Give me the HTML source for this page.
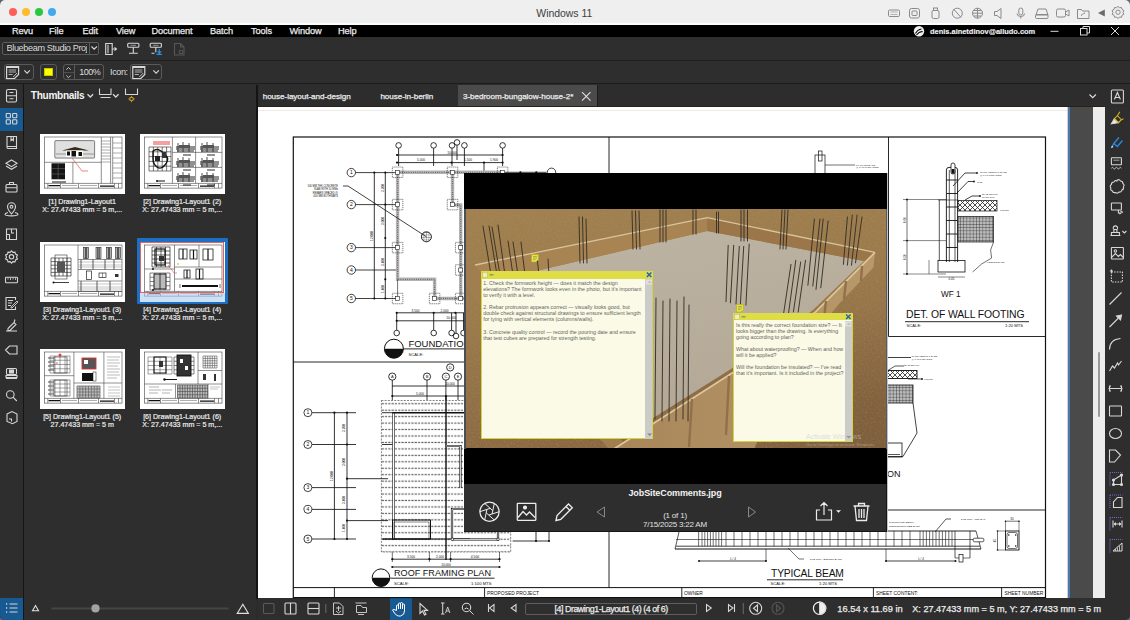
<!DOCTYPE html>
<html><head><meta charset="utf-8"><style>
*{margin:0;padding:0;box-sizing:border-box}
html,body{width:1130px;height:620px;overflow:hidden;background:#5c6570}
body{position:relative;font-family:"Liberation Sans",sans-serif}
.a{position:absolute;white-space:nowrap}
#win{position:absolute;left:0;top:0;width:1130px;height:620px;border-radius:5px 5px 5px 5px;overflow:hidden;background:#2b2b2b}
.mt{font-size:9.2px;color:#ececec;letter-spacing:-0.1px;-webkit-text-stroke:0.25px #ececec}
.tab{top:91.8px;font-size:8.1px;color:#ececec;letter-spacing:-0.05px;-webkit-text-stroke:0.25px #ececec}
.st{font-size:8.9px;color:#ececec;-webkit-text-stroke:0.25px #ececec}
.cap{position:absolute;color:#ececec;-webkit-text-stroke:0.2px #ececec;font-size:7.1px;text-align:center;width:120px;line-height:8.8px;white-space:nowrap}
.nt{font-size:5.3px;line-height:6.05px;color:#64645c;white-space:nowrap}
svg{position:absolute;overflow:visible}
</style></head>
<body><div id="win">
<div class="a" style="left:0;top:0;width:1130px;height:23px;background:#efefef"></div>
<div class="a" style="left:0;top:23px;width:1130px;height:1.6px;background:#fdfdfd"></div>
<div class="a" style="left:8.5px;top:8.4px;width:8px;height:8px;border-radius:50%;background:#fe5f57"></div>
<div class="a" style="left:21.8px;top:8.4px;width:8px;height:8px;border-radius:50%;background:#febc2e"></div>
<div class="a" style="left:35px;top:8.4px;width:8px;height:8px;border-radius:50%;background:#2ac840"></div>
<div class="a" style="left:48.1px;top:8.4px;width:8px;height:8px;border-radius:50%;background:#40aaf0"></div>
<div class="a" style="left:536.3px;top:6.8px;font-size:10.5px;color:#3e3e3e;letter-spacing:-0.05px">Windows 11</div>
<svg class="a" style="left:0;top:0" width="1130" height="24" fill="none" stroke="#8a8a8a" stroke-width="1"><rect x="888.5" y="10" width="11" height="6.5" rx="1.2"/><path d="M890.5 12h7M890.5 14.5h7" stroke-width="0.6"/><rect x="909.5" y="8.5" width="10" height="9.5" rx="2"/><rect x="912" y="11" width="5" height="4.5" rx="0.8"/><rect x="932" y="10.5" width="7" height="8" rx="1.5"/><rect x="933.5" y="8" width="4" height="2.5"/><circle cx="957.3" cy="13.2" r="5"/><path d="M953.5 9l7.6 8.5"/><circle cx="977.5" cy="13.2" r="5"/><path d="M972.5 13.2h10M977.5 8.2v10M974 10.5h7M974 16h7"/><path d="M994.5 11.5h2.5l4-3v10l-4-3h-2.5z"/><rect x="1018.8" y="8" width="4" height="7" rx="2"/><path d="M1017 13.5q0 3 3.8 3q3.8 0 3.8-3M1020.8 16.5v2"/><path d="M1036 15l2-6h8l2 6z"/><rect x="1035.5" y="14.5" width="12.5" height="4" rx="1"/><rect x="1056.5" y="9" width="9" height="8" rx="1.5"/><path d="M1065.5 12l3.5-2v6l-3.5-2"/><path d="M1077.5 9.5h4l1 1.5h6.5v7.5h-11.5z"/><path d="M1081 15l4-2M1081 15.5h1M1085 13h-1" stroke-width="0.8"/></svg>
<svg class="a" style="left:0;top:0" width="1130" height="24"><path d="M1104.8 9.5v7l-6.8-3.5z" fill="#6a6a6a"/><g fill="none" stroke="#8a8a8a" stroke-width="1"><circle cx="1118" cy="12.2" r="2.2"/><path d="M1118 6.2l1.4 1.6 2.1-.3.5 2 1.9 1-.9 1.9.9 1.9-1.9 1-.5 2-2.1-.3-1.4 1.6-1.4-1.6-2.1.3-.5-2-1.9-1 .9-1.9-.9-1.9 1.9-1 .5-2 2.1.3z"/></g></svg>
<div class="a" style="left:0;top:24.6px;width:1130px;height:12.6px;background:#000"></div>
<div class="a mt" style="left:12px;top:25.8px">Revu</div>
<div class="a mt" style="left:49px;top:25.8px">File</div>
<div class="a mt" style="left:82.5px;top:25.8px">Edit</div>
<div class="a mt" style="left:116px;top:25.8px">View</div>
<div class="a mt" style="left:151.5px;top:25.8px">Document</div>
<div class="a mt" style="left:210px;top:25.8px">Batch</div>
<div class="a mt" style="left:251px;top:25.8px">Tools</div>
<div class="a mt" style="left:289.5px;top:25.8px">Window</div>
<div class="a mt" style="left:338px;top:25.8px">Help</div>
<div class="a" style="left:930px;top:26.6px;font-size:7.45px;font-weight:bold;color:#f0f0f0;-webkit-text-stroke:0.15px #f0f0f0">denis.ainetdinov@alludo.com</div>
<svg class="a" style="left:912px;top:25px" width="14" height="13"><circle cx="7" cy="6.3" r="5.2" fill="#f0f0f0"/><path d="M3.5 8.5q2-4 6-4.5M4.5 10q3-4 6.2-3.2" stroke="#000" stroke-width="1.1" fill="none"/></svg>
<svg class="a" style="left:0;top:24px" width="1130" height="14" stroke="#d8d8d8" stroke-width="1" fill="none"><path d="M1050.5 7.3h8"/><rect x="1080.5" y="4.5" width="6.5" height="6.5"/><path d="M1083 4.5v-2h6.5v6.5h-2.5"/><path d="M1111 3l8 8M1119 3l-8 8"/></svg>
<div class="a" style="left:0;top:37.2px;width:1130px;height:22.6px;background:#2e2e2e"></div>
<div class="a" style="left:0;top:59.6px;width:1130px;height:1px;background:#1f1f1f"></div>
<div class="a" style="left:0;top:60.6px;width:1130px;height:23px;background:#2e2e2e"></div>
<div class="a" style="left:0;top:83px;width:1130px;height:1.4px;background:#1c1c1c"></div>
<div class="a" style="left:2px;top:42px;width:97px;height:13px;border:1px solid #5c5c5c;border-radius:2px;background:#2a2a2a"></div>
<div class="a" style="left:88.6px;top:42px;width:1px;height:13px;background:#5c5c5c"></div>
<div class="a" style="left:6.5px;top:43.4px;width:80px;height:11px;overflow:hidden;white-space:nowrap;font-size:9.1px;color:#dcdcdc;letter-spacing:-0.35px">Bluebeam Studio Projects</div>
<svg class="a" style="left:0;top:37px" width="300" height="48" fill="none" stroke="#d8d8d8" stroke-width="1.1"><path d="M91.5 9.5l2.7 2.7 2.7-2.7"/><path d="M105.7 6.5h6.5v11h-6.5zM108 7.8v8.5"/><path d="M112.5 12h3.5M114.5 10.3l2 1.7-2 1.7"/><rect x="127.7" y="6.3" width="11.2" height="4" rx="1"/><path d="M133.3 10.3v5.5M129 16.2h8.8"/><path d="M130.5 8.3h5.5" stroke-width="0.6"/><rect x="150.2" y="6.3" width="11.2" height="4" rx="1"/><path d="M155.8 10.3v5M151.5 16.2h3"/><path d="M153 8.3h5.5" stroke-width="0.6"/><path d="M159.3 12v4M157.5 14.3l1.8 1.8 1.8-1.8M156.5 17.3h5.5" stroke="#2b8ee0" stroke-width="1.2"/><path d="M174.5 6.5h6l3.5 3.5v8h-9.5z M180.5 6.5v3.5h3.5" stroke="#575757"/><circle cx="181" cy="15" r="1.8" stroke="#575757"/></svg>
<div class="a" style="left:4.4px;top:64px;width:29.2px;height:16.2px;border:1px solid #5a5a5a;border-radius:3px"></div>
<div class="a" style="left:40px;top:64px;width:16.6px;height:16.2px;border:1px solid #5a5a5a;border-radius:3px"></div>
<div class="a" style="left:63px;top:64px;width:40.5px;height:16.2px;border:1px solid #5a5a5a;border-radius:3px"></div>
<div class="a" style="left:129.7px;top:64px;width:32.8px;height:16.2px;border:1px solid #5a5a5a;border-radius:3px"></div>
<div class="a" style="left:74px;top:64px;width:1px;height:16.2px;background:#5a5a5a"></div>
<div class="a" style="left:44px;top:67.5px;width:8.7px;height:8.9px;background:#ffff00;border:0.5px solid #c8c800"></div>
<div class="a" style="left:79.2px;top:67.4px;font-size:9px;color:#dedede;letter-spacing:-0.45px">100%</div>
<div class="a" style="left:110px;top:67.4px;font-size:9px;color:#dedede;letter-spacing:-0.35px">Icon:</div>
<svg class="a" style="left:0;top:60px" width="300" height="25" fill="none" stroke="#d8d8d8" stroke-width="1.1"><path d="M6.6 6.5h12v8l-4 4h-8z" stroke-width="1.2"/><path d="M6.6 7.3h12" stroke-width="1.6"/><path d="M8.6 10h7.5M8.6 12h7.5M8.6 14.5h4" stroke-width="0.8"/><path d="M13.1 17l4-4" stroke-width="0.9"/><path d="M24.3 10.3l2.8 2.8 2.8-2.8"/><path d="M132.8 6.5h12v8l-4 4h-8z" stroke-width="1.2"/><path d="M132.8 7.3h12" stroke-width="1.6"/><path d="M134.8 10h7.5M134.8 12h7.5M134.8 14.5h4" stroke-width="0.8"/><path d="M139.3 17l4-4" stroke-width="0.9"/><path d="M153.3 10.3l2.8 2.8 2.8-2.8"/><path d="M66.3 9.7l2.2-2.2 2.2 2.2M66.3 15.5l2.2 2.2 2.2-2.2" stroke-width="0.9"/><path d="M64 12.6h10" stroke="#5a5a5a" stroke-width="0.8"/></svg>
<div class="a" style="left:0;top:84.4px;width:23px;height:536px;background:#2e2e2e"></div>
<div class="a" style="left:23px;top:84.4px;width:1.2px;height:536px;background:#151515"></div>
<div class="a" style="left:24.2px;top:84.4px;width:232px;height:536px;background:#2e2e2e"></div>
<div class="a" style="left:256px;top:84.6px;width:2px;height:514px;background:#141414"></div>
<div class="a" style="left:0;top:107.7px;width:23px;height:23px;background:#175a92"></div>
<div class="a" style="left:0;top:597.5px;width:23px;height:23px;background:#175a92"></div>
<svg class="a" style="left:0;top:0" width="24" height="620" fill="none" stroke="#d6d6d6" stroke-width="1.1"><rect x="6.5" y="89.5" width="10" height="12.5" rx="1.5"/><path d="M6.5 95.7h10M9.5 92.5h4M9.5 98.7h4"/><rect x="6.2" y="113.5" width="4.2" height="4.2" rx="0.8"/><rect x="12.6" y="113.5" width="4.2" height="4.2" rx="0.8"/><rect x="6.2" y="119.8" width="4.2" height="4.2" rx="0.8"/><rect x="12.6" y="119.8" width="4.2" height="4.2" rx="0.8"/><path d="M7 136.5h9.5v12h-8.5q-1 0-1-1.2z M7 146.5h9.5 M11 136.5v4l1.2-1 1.2 1v-4"/><path d="M11.5 160l5.5 3.3-5.5 3.3-5.5-3.3z M6 166l5.5 3.3 5.5-3.3"/><rect x="6" y="184.5" width="11" height="7.5" rx="1"/><path d="M9.5 184.5v-2h4v2M6 187.8h11"/><path d="M11.5 214q-4-4.5-4-7.2a4 4 0 0 1 8 0q0 2.7-4 7.2z"/><circle cx="11.5" cy="206.8" r="1.4"/><path d="M8 212.5q-3 .8-3 1.8q0 1.6 6.5 1.6t6.5-1.6q0-1-3-1.8"/><path d="M6.5 229h10v10.5h-10z M11.5 229v4h2.5 M6.5 234.5h3v5"/><circle cx="11.5" cy="256.8" r="2.2"/><path d="M11.5 250.8l1.4 1.6 2.1-.3.5 2 1.9 1-.9 1.9.9 1.9-1.9 1-.5 2-2.1-.3-1.4 1.6-1.4-1.6-2.1.3-.5-2-1.9-1 .9-1.9-.9-1.9 1.9-1 .5-2 2.1.3z"/><rect x="5.5" y="277.3" width="12" height="5.5" rx="0.8"/><path d="M8 277.5v2M10.5 277.5v2.5M13 277.5v2M15.5 277.5v2.5" stroke-width="0.8"/><path d="M15.5 300v-2.5h-9.5v12h9.5v-3 M8 300.5h5M8 303h4M8 305.5h3" /><path d="M11 307l6-6 1 1-6 6h-1z" stroke-width="0.9"/><path d="M6 331h11M8 328.5l6-6 2 2-6 6h-2z M14 322.5l1-3" /><path d="M17 346v8h-7.5l-4-4 4-4z"/><rect x="6.5" y="368.5" width="10" height="6" rx="1"/><path d="M6 375.5h11v2h-11z M6 378.5h11"/><rect x="9.5" y="370" width="4" height="3" fill="#d6d6d6"/><circle cx="10.3" cy="394.5" r="3.8"/><path d="M13 397.2l3.8 3.8"/><path d="M7 414l5-2.5 5 2.5v7.5l-4.5 2.2-5.5-2.2z M9 419h2.5v2.5"/><path d="M9.5 604h8M9.5 608h8M9.5 612h8" stroke-width="1.2"/><path d="M6 604h1.2M6 608h1.2M6 612h1.2" stroke-width="1.4"/></svg>
<div class="a" style="left:30.8px;top:89.8px;font-size:10.1px;font-weight:bold;color:#f4f4f4;letter-spacing:-0.3px">Thumbnails</div>
<svg class="a" style="left:0;top:84px" width="256" height="24" fill="none" stroke="#d6d6d6" stroke-width="1.1"><path d="M87.5 10.2l2.8 2.8 2.8-2.8" stroke-width="1.4"/><path d="M99.5 4.5v6h11.5v-6 M100.5 13.5h10" /><path d="M113 10.2l2.8 2.8 2.8-2.8" stroke-width="1.3"/><path d="M125.5 4.5v6h12v-6"/><circle cx="131.5" cy="15" r="1.8" stroke="#d9a422"/><path d="M131.5 11.8v1.2M131.5 17v1.2M128.3 15h1.2M133.7 15h1.2" stroke="#d9a422" stroke-width="0.8"/></svg>
<svg class="a" style="left:39.7px;top:133.7px" width="85" height="60" viewBox="0 0 85 60"><rect x="0" y="0" width="85" height="60" fill="#fff"/><g fill="none" stroke="#333" stroke-width="0.55"><rect x="4.5" y="3" width="77.5" height="51.1"/><path d="M4.5 49.4h77.5M7.8 49.4v4.7M20.5 49.4v4.7M38.5 49.4v4.7M58.5 49.4v4.7M74.5 49.4v4.7M78.5 49.4v4.7"/><path d="M8.5 51.7h11.5M60 52.2h14" stroke="#111" stroke-width="1.3"/><path d="M22 51.5h15M40 51.5h17" stroke="#777" stroke-width="0.6"/></g><rect x="14.8" y="6.6" width="39.8" height="17.5" rx="1" fill="#e0e0e0" stroke="#333" stroke-width="0.6"/><path d="M16 20h38" stroke="#bbb" stroke-width="2"/><path d="M22 16.5L35 13L49 16.5z" fill="#3a2a1a"/><rect x="26" y="16.5" width="17" height="6.5" fill="#fff"/><rect x="27" y="17.5" width="3" height="4" fill="#111"/><rect x="31.5" y="17" width="4.5" height="5.5" fill="#111"/><rect x="38.5" y="18" width="3.5" height="4" fill="#111"/><path d="M4.5 28.3h56.8M32.9 28.3v21.1M61.3 3v46.4M70.6 3v46.4M72.7 3v46.4" stroke="#333" stroke-width="0.55" fill="none"/><path d="M61.5 7h9M61.5 10h9M61.5 13h9M61.5 16h9M61.5 19h9M61.5 22h9M61.5 25h9M61.5 28h9" stroke="#444" stroke-width="0.45"/><path d="M73 9h9M73 14h9M73 19h9M73 24h9M73 29h9M73 34h9M73 39h9M73 44h9" stroke="#444" stroke-width="0.45"/><rect x="11.5" y="29.3" width="13.5" height="16" fill="#151515"/><path d="M11.5 34.6h13.5M11.5 40h13.5M18.2 29.3v16" stroke="#777" stroke-width="0.5"/><path d="M12 48h14" stroke="#111" stroke-width="1"/><path d="M32 24l10 13h6" stroke="#e03030" stroke-width="0.6" fill="none"/></svg>
<div class="cap" style="left:22.200000000000003px;top:197.7px">[1] Drawing1-Layout1<br>X: 27.47433 mm = 5 m,...</div>
<svg class="a" style="left:139.7px;top:133.7px" width="85" height="60" viewBox="0 0 85 60"><rect x="0" y="0" width="85" height="60" fill="#fff"/><g fill="none" stroke="#333" stroke-width="0.55"><rect x="4.5" y="3" width="77.5" height="51.1"/><path d="M4.5 49.4h77.5M7.8 49.4v4.7M20.5 49.4v4.7M38.5 49.4v4.7M58.5 49.4v4.7M74.5 49.4v4.7M78.5 49.4v4.7"/><path d="M8.5 51.7h11.5M60 52.2h14" stroke="#111" stroke-width="1.3"/><path d="M22 51.5h15M40 51.5h17" stroke="#777" stroke-width="0.6"/></g><path d="M32.4 3v46.4M55.6 3v46.4M32.4 18.4h49.6M32.4 33.4h49.6" stroke="#333" stroke-width="0.55" fill="none"/><rect x="13" y="7" width="17" height="4" fill="#f4a0a0"/><path d="M9.00 13v24M13.40 13v24M17.80 13v24M22.20 13v24M26.60 13v24M31.00 13v24M9 13.00h22M9 17.80h22M9 22.60h22M9 27.40h22M9 32.20h22M9 37.00h22" stroke="#222" stroke-width="0.6" fill="none"/><path d="M13 17q4-3 8 0t6 6-2 8-8 2-4-8z" stroke="#111" stroke-width="1.4" fill="none"/><rect x="15" y="22" width="5" height="5" fill="#222"/><rect x="22" y="18" width="4" height="6" fill="#333"/><path d="M17 47h8" stroke="#111" stroke-width="1"/><circle cx="17" cy="47" r="1" fill="#111"/><path d="M36 13h19M36 15h19M37 17h17" stroke="#222" stroke-width="1"/><path d="M38 9v9M43 8v10M49 9v9" stroke="#222" stroke-width="0.8"/><rect x="39" y="11" width="11" height="3" fill="#555"/><path d="M43 21h8" stroke="#111" stroke-width="0.9"/><path d="M60 13h19M60 15h19M61 17h17" stroke="#222" stroke-width="1"/><path d="M62 9v9M67 8v10M73 9v9" stroke="#222" stroke-width="0.8"/><rect x="63" y="11" width="11" height="3" fill="#555"/><path d="M67 21h8" stroke="#111" stroke-width="0.9"/><path d="M36 28h19M36 30h19M37 32h17" stroke="#222" stroke-width="1"/><path d="M38 24v9M43 23v10M49 24v9" stroke="#222" stroke-width="0.8"/><rect x="39" y="26" width="11" height="3" fill="#555"/><path d="M43 36h8" stroke="#111" stroke-width="0.9"/><path d="M60 28h19M60 30h19M61 32h17" stroke="#222" stroke-width="1"/><path d="M62 24v9M67 23v10M73 24v9" stroke="#222" stroke-width="0.8"/><rect x="63" y="26" width="11" height="3" fill="#555"/><path d="M67 36h8" stroke="#111" stroke-width="0.9"/><path d="M36 43h19M36 45h19M37 47h17" stroke="#222" stroke-width="1"/><path d="M38 39v9M43 38v10M49 39v9" stroke="#222" stroke-width="0.8"/><rect x="39" y="41" width="11" height="3" fill="#555"/><path d="M43 51h8" stroke="#111" stroke-width="0.9"/><path d="M60 43h19M60 45h19M61 47h17" stroke="#222" stroke-width="1"/><path d="M62 39v9M67 38v10M73 39v9" stroke="#222" stroke-width="0.8"/><rect x="63" y="41" width="11" height="3" fill="#555"/><path d="M67 51h8" stroke="#111" stroke-width="0.9"/></svg>
<div class="cap" style="left:122.19999999999999px;top:197.7px">[2] Drawing1-Layout1 (2)<br>X: 27.47433 mm = 5 m,...</div>
<svg class="a" style="left:39.7px;top:241.5px" width="85" height="60" viewBox="0 0 85 60"><rect x="0" y="0" width="85" height="60" fill="#fff"/><g fill="none" stroke="#333" stroke-width="0.55"><rect x="4.5" y="3" width="77.5" height="51.1"/><path d="M4.5 49.4h77.5M7.8 49.4v4.7M20.5 49.4v4.7M38.5 49.4v4.7M58.5 49.4v4.7M74.5 49.4v4.7M78.5 49.4v4.7"/><path d="M8.5 51.7h11.5M60 52.2h14" stroke="#111" stroke-width="1.3"/><path d="M22 51.5h15M40 51.5h17" stroke="#777" stroke-width="0.6"/></g><path d="M38 3v46.4M38 17.5h44M38 27.5h44M38 39h44M38 49.4h44" stroke="#333" stroke-width="0.55" fill="none"/><path d="M11.00 16v18M15.00 16v18M19.00 16v18M23.00 16v18M27.00 16v18M31.00 16v18M11 16.00h20M11 19.60h20M11 23.20h20M11 26.80h20M11 30.40h20M11 34.00h20" stroke="#333" stroke-width="0.7" fill="none"/><rect x="15" y="13" width="12" height="24" fill="none" stroke="#333" stroke-width="0.6"/><rect x="17" y="20" width="8" height="10" fill="#555"/><path d="M13 40.5h16" stroke="#111" stroke-width="0.8"/><circle cx="13.5" cy="40.5" r="1" fill="#111"/><rect x="43.5" y="5.5" width="5" height="11" fill="#ccc" stroke="#222" stroke-width="0.6"/><path d="M45.3 5.5v11M46.7 5.5v11" stroke="#111" stroke-width="0.8"/><rect x="56" y="5.5" width="5" height="11" fill="#ccc" stroke="#222" stroke-width="0.6"/><path d="M57.8 5.5v11M59.2 5.5v11" stroke="#111" stroke-width="0.8"/><rect x="66.5" y="5.5" width="5" height="11" fill="#ccc" stroke="#222" stroke-width="0.6"/><path d="M68.3 5.5v11M69.7 5.5v11" stroke="#111" stroke-width="0.8"/><rect x="75.5" y="5.5" width="5" height="11" fill="#ccc" stroke="#222" stroke-width="0.6"/><path d="M77.3 5.5v11M78.7 5.5v11" stroke="#111" stroke-width="0.8"/><path d="M38 20h44M38 23h44M38 25h44" stroke="#888" stroke-width="0.5"/><path d="M41 17.5v10M53 17.5v10M65 17.5v10M74 17.5v10" stroke="#333" stroke-width="0.8"/><path d="M38 42h44M38 45h44M38 47h44" stroke="#888" stroke-width="0.5"/><path d="M41 39v10M57 39v10M70 39v10" stroke="#333" stroke-width="0.8"/><rect x="46.5" y="29" width="5" height="8.5" fill="none" stroke="#222" stroke-width="0.7"/><rect x="59" y="31" width="7" height="4.5" fill="none" stroke="#222" stroke-width="0.7"/><path d="M62.5 31v4.5" stroke="#222" stroke-width="0.5"/><rect x="75" y="32" width="3.5" height="3" fill="#333"/></svg>
<div class="cap" style="left:22.200000000000003px;top:305.5px">[3] Drawing1-Layout1 (3)<br>X: 27.47433 mm = 5 m,...</div>
<div class="a" style="left:136.7px;top:238.3px;width:91px;height:66px;background:#1d6fc4;border-radius:1px"></div>
<svg class="a" style="left:139.7px;top:241.5px" width="85" height="60" viewBox="0 0 85 60"><rect x="0" y="0" width="85" height="60" fill="#fff"/><g fill="none" stroke="#333" stroke-width="0.55"><rect x="4.5" y="3" width="77.5" height="51.1"/><path d="M4.5 49.4h77.5M7.8 49.4v4.7M20.5 49.4v4.7M38.5 49.4v4.7M58.5 49.4v4.7M74.5 49.4v4.7M78.5 49.4v4.7"/><path d="M8.5 51.7h11.5M60 52.2h14" stroke="#111" stroke-width="1.3"/><path d="M22 51.5h15M40 51.5h17" stroke="#777" stroke-width="0.6"/></g><path d="M34.5 3v46.4M4.5 27h30M59 3v22M34.5 25h47.5M34.5 37h47.5" stroke="#333" stroke-width="0.55" fill="none"/><path d="M12.00 5v20M16.50 5v20M21.00 5v20M25.50 5v20M30.00 5v20M12 5.00h18M12 9.00h18M12 13.00h18M12 17.00h18M12 21.00h18M12 25.00h18" stroke="#222" stroke-width="0.7" fill="none"/><rect x="15" y="7" width="10" height="16" fill="none" stroke="#111" stroke-width="1.2"/><rect x="19" y="14" width="5" height="5" fill="#333"/><path d="M10.00 31v17M15.00 31v17M20.00 31v17M25.00 31v17M30.00 31v17M10 31.00h20M10 35.25h20M10 39.50h20M10 43.75h20M10 48.00h20" stroke="#333" stroke-width="0.6" fill="none"/><rect x="14" y="32" width="12" height="15" fill="#bbb" stroke="#111" stroke-width="0.9"/><path d="M20 32v15" stroke="#111" stroke-width="0.8"/><circle cx="13" cy="27" r="1" fill="#111"/><circle cx="13" cy="48" r="1" fill="#111"/><rect x="39" y="7" width="8" height="10" fill="none" stroke="#222" stroke-width="0.8"/><path d="M43.0 7v10" stroke="#111" stroke-width="1.2"/><rect x="50" y="8" width="7" height="9" fill="none" stroke="#222" stroke-width="0.8"/><path d="M53.5 8v9" stroke="#111" stroke-width="1.2"/><rect x="63" y="7" width="10" height="11" fill="none" stroke="#222" stroke-width="0.8"/><path d="M68.0 7v11" stroke="#111" stroke-width="1.2"/><rect x="44" y="28" width="6" height="8" fill="none" stroke="#222" stroke-width="0.8"/><path d="M47.0 28v8" stroke="#111" stroke-width="1.2"/><rect x="56" y="27" width="7" height="10" fill="none" stroke="#222" stroke-width="0.8"/><path d="M59.5 27v10" stroke="#111" stroke-width="1.2"/><path d="M42 44h36" stroke="#111" stroke-width="2"/><path d="M40 42v4M80 42v4" stroke="#333" stroke-width="0.7"/><path d="M28 23l6 8h3" stroke="#e03030" stroke-width="0.5" fill="none"/><circle cx="38" cy="22" r="0.8" fill="#c8a020"/></svg>
<div class="a" style="left:140.29999999999998px;top:242.0px;width:83.5px;height:51px;border:1px solid #e86060"></div>
<div class="a" style="left:139.7px;top:293.0px;width:85px;height:8.5px;background:rgba(170,205,240,0.6)"></div>
<div class="cap" style="left:122.19999999999999px;top:305.5px">[4] Drawing1-Layout1 (4)<br>X: 27.47433 mm = 5 m,...</div>
<svg class="a" style="left:39.7px;top:348.7px" width="85" height="60" viewBox="0 0 85 60"><rect x="0" y="0" width="85" height="60" fill="#fff"/><g fill="none" stroke="#333" stroke-width="0.55"><rect x="4.5" y="3" width="77.5" height="51.1"/><path d="M4.5 49.4h77.5M7.8 49.4v4.7M20.5 49.4v4.7M38.5 49.4v4.7M58.5 49.4v4.7M74.5 49.4v4.7M78.5 49.4v4.7"/><path d="M8.5 51.7h11.5M60 52.2h14" stroke="#111" stroke-width="1.3"/><path d="M22 51.5h15M40 51.5h17" stroke="#777" stroke-width="0.6"/></g><path d="M33.9 3v46.4M63.9 3v46.4M4.5 26.7h29.4M33.9 34h48.1" stroke="#333" stroke-width="0.55" fill="none"/><path d="M10.00 7v17M15.00 7v17M20.00 7v17M25.00 7v17M30.00 7v17M10 7.00h20M10 11.25h20M10 15.50h20M10 19.75h20M10 24.00h20" stroke="#444" stroke-width="0.5" fill="none"/><rect x="14" y="8" width="13" height="16" fill="none" stroke="#333" stroke-width="0.6"/><path d="M8 9h6M8 13h6M8 17h6M8 21h6" stroke="#222" stroke-width="0.8"/><circle cx="20" cy="6" r="1.5" fill="#e04040"/><circle cx="17" cy="14" r="0.8" fill="#e04040"/><path d="M10.00 31v16M15.00 31v16M20.00 31v16M25.00 31v16M30.00 31v16M10 31.00h20M10 35.00h20M10 39.00h20M10 43.00h20M10 47.00h20" stroke="#444" stroke-width="0.5" fill="none"/><rect x="14" y="31" width="13" height="16" fill="none" stroke="#333" stroke-width="0.6"/><path d="M8 33h6M8 37h6M8 41h6M8 45h6" stroke="#222" stroke-width="0.8"/><rect x="42" y="9" width="14" height="11" fill="#555" stroke="#e03030" stroke-width="0.9"/><rect x="44" y="11" width="4" height="4" fill="#fff"/><rect x="42" y="24" width="14" height="8" fill="#111"/><rect x="53" y="23" width="3" height="9" fill="#fff" stroke="#111" stroke-width="0.5"/><path d="M67 8h13M67 11h12M67 14h13M67 17h11M67 20h13M67 23h12M67 26h13M67 29h10" stroke="#777" stroke-width="0.5"/><path d="M37.00 37v12M39.88 37v12M42.75 37v12M45.62 37v12M48.50 37v12M51.38 37v12M54.25 37v12M57.12 37v12M60.00 37v12M37 37.00h23M37 40.00h23M37 43.00h23M37 46.00h23M37 49.00h23" stroke="#333" stroke-width="0.6" fill="none"/><rect x="37" y="37" width="23" height="12" fill="#777" opacity="0.5"/><path d="M68 38h12M68 41h12M68 44h12M68 47h12" stroke="#888" stroke-width="0.5"/></svg>
<div class="cap" style="left:22.200000000000003px;top:412.7px">[5] Drawing1-Layout1 (5)<br>27.47433 mm = 5 m</div>
<svg class="a" style="left:139.7px;top:348.7px" width="85" height="60" viewBox="0 0 85 60"><rect x="0" y="0" width="85" height="60" fill="#fff"/><g fill="none" stroke="#333" stroke-width="0.55"><rect x="4.5" y="3" width="77.5" height="51.1"/><path d="M4.5 49.4h77.5M7.8 49.4v4.7M20.5 49.4v4.7M38.5 49.4v4.7M58.5 49.4v4.7M74.5 49.4v4.7M78.5 49.4v4.7"/><path d="M8.5 51.7h11.5M60 52.2h14" stroke="#111" stroke-width="1.3"/><path d="M22 51.5h15M40 51.5h17" stroke="#777" stroke-width="0.6"/></g><path d="M58 3v32M4.5 35h77.5M58 21.5h24M35.5 35v14.4M68 35v14.4" stroke="#333" stroke-width="0.55" fill="none"/><path d="M8.00 8v17M14.00 8v17M20.00 8v17M26.00 8v17M32.00 8v17M8 8.00h24M8 12.25h24M8 16.50h24M8 20.75h24M8 25.00h24" stroke="#444" stroke-width="0.5" fill="none"/><rect x="14" y="8" width="12" height="16" fill="none" stroke="#111" stroke-width="1"/><rect x="19" y="12" width="4" height="6" fill="#333"/><path d="M34.00 8v17M39.00 8v17M44.00 8v17M49.00 8v17M54.00 8v17M34 8.00h20M34 12.25h20M34 16.50h20M34 20.75h20M34 25.00h20" stroke="#333" stroke-width="0.6" fill="none"/><rect x="37" y="6" width="14" height="21" fill="#333" stroke="#111" stroke-width="0.9"/><rect x="40" y="10" width="3" height="4" fill="#fff"/><rect x="45" y="17" width="3" height="4" fill="#fff"/><path d="M25 30.5h12" stroke="#111" stroke-width="1"/><circle cx="24.5" cy="30.5" r="1.2" fill="#111"/><path d="M63.00 7v12M65.33 7v12M67.67 7v12M70.00 7v12M72.33 7v12M74.67 7v12M77.00 7v12M63 7.00h14M63 9.40h14M63 11.80h14M63 14.20h14M63 16.60h14M63 19.00h14" stroke="#555" stroke-width="0.6" fill="none"/><rect x="63" y="25" width="3" height="6" fill="#333"/><rect x="74" y="25" width="2" height="7" fill="#333"/><path d="M9 38h10M9 41h12M9 44h9M22 41h10M22 44h8" stroke="#666" stroke-width="0.5"/><path d="M37.50 36v13M40.00 36v13M42.50 36v13M45.00 36v13M47.50 36v13M50.00 36v13M52.50 36v13M55.00 36v13M57.50 36v13M60.00 36v13M62.50 36v13M65.00 36v13M67.50 36v13M37.5 36.00h30M37.5 39.25h30M37.5 42.50h30M37.5 45.75h30M37.5 49.00h30" stroke="#333" stroke-width="0.6" fill="none"/><rect x="37.5" y="36" width="30" height="13" fill="#666" opacity="0.45"/><path d="M70 38h10M70 40h8" stroke="#888" stroke-width="0.5"/></svg>
<div class="cap" style="left:122.19999999999999px;top:412.7px">[6] Drawing1-Layout1 (6)<br>X: 27.47433 mm = 5 m,...</div>
<svg class="a" style="left:0;top:596px" width="256" height="24"><path d="M35.5 9.5l3 5.2h-6z" fill="none" stroke="#e0e0e0" stroke-width="1.1"/><path d="M52 12.4h176" stroke="#444" stroke-width="2" stroke-linecap="round"/><circle cx="95.5" cy="12.4" r="4.1" fill="#a3a3a3"/><path d="M242.8 8.3l5.5 9h-11z" fill="none" stroke="#e0e0e0" stroke-width="1.2"/></svg>
<div class="a" style="left:258px;top:84.4px;width:872px;height:21.4px;background:#2d2d2d"></div>
<div class="a" style="left:457.8px;top:85px;width:139.5px;height:21.5px;background:#4b4b4b"></div>
<div class="a tab" style="left:262.7px">house-layout-and-design</div>
<div class="a tab" style="left:380.4px">house-in-berlin</div>
<div class="a tab" style="left:463px">3-bedroom-bungalow-house-2*</div>
<svg class="a" style="left:0;top:84px" width="1130" height="24" fill="none" stroke="#e0e0e0" stroke-width="1.1"><path d="M582 8.2l8.5 8.5M590.5 8.2l-8.5 8.5"/><path d="M1089.5 10.5l3.2 3.2 3.2-3.2"/></svg>
<div class="a" style="left:258px;top:105.8px;width:846px;height:1px;background:#2a2014"></div>
<div class="a" style="left:258px;top:106.6px;width:846px;height:1px;background:#173352"></div>
<div class="a" style="left:597.3px;top:85px;width:1.2px;height:21px;background:#1c1c1c"></div>
<div class="a" style="left:258px;top:107.3px;width:812px;height:491px;background:#fff"></div>
<div class="a" style="left:258px;top:110px;width:810px;height:1px;background:#ececec"></div>
<div class="a" style="left:1067.2px;top:107.3px;width:1px;height:491px;background:#d0d0d0"></div>
<div class="a" style="left:1068.4px;top:107.3px;width:1.2px;height:491px;background:#4a78ad"></div>
<div class="a" style="left:1070px;top:107.3px;width:23px;height:491px;background:#4a4a4a"></div>
<div class="a" style="left:1093px;top:107.3px;width:12px;height:491px;background:#ededed"></div>
<div class="a" style="left:1097.8px;top:352px;width:2.4px;height:65px;background:#9a9a9a;border-radius:1px"></div>
<div class="a" style="left:1104.8px;top:107px;width:25.2px;height:491.5px;background:#2e2e2e"></div>
<svg class="a" style="left:0;top:0" width="1130" height="620" fill="none" stroke="#d8d8d8" stroke-width="1.1"><rect x="1111.4" y="90.0" width="12" height="13" rx="1"/><path d="M1114.4 99.5l3-7 3 7M1115.4 97.5h4"/><path d="M1111.4 123.7l3-5 4 4z" fill="#e8e8e8"/><path d="M1114.4 118.7l3-3 4 4-3 3zM1117.4 115.7l2.5-4M1121.4 119.7l2-1" stroke="#d9b21e"/><path d="M1111.4 147.5l2.5-4 5-6M1113.9 143.5l3.5 3 5-6" stroke="#2a8ae0" stroke-width="1.3"/><path d="M1111.4 147.5l1.5-1" stroke="#fff"/><rect x="1111.4" y="157.7" width="10" height="7" rx="0.5"/><path d="M1113.4 160.2h6" stroke-width="0.7"/><path d="M1111.4 168.2q1-1.5 2 0t2 0 2 0 2 0 2 0" stroke-width="0.9"/><path d="M1117.4 180q2-1 3 1q2.5 0 2.5 2.5q2 1.5 .5 3.5q.5 2.5-1.5 3q-.5 2.5-3 2q-1.5 2-3.5 .5q-2.5 .5-3-1.5q-2.5-1-1.5-3q-1.5-2 .5-3.5q0-2.5 2.5-2.5q1-2 3-1z"/><rect x="1111.4" y="203.0" width="10" height="7" rx="0.5"/><path d="M1118.4 210.0v3h3M1119.4 214.0l3-2-2-1"/><path d="M1110.4 235.5h10M1111.4 235.5v-3h8v3M1113.9 232.5v-3h3v3M1113.4 229a2.2 2.2 0 1 1 4 0"/><path d="M1122.4 231l2 2 2-2"/><rect x="1111.4" y="247.5" width="12" height="11.5" rx="0.5"/><path d="M1111.4 257.5l4-4 3 3 2-2 3 3"/><circle cx="1115.4" cy="251.0" r="1.2"/><path d="M1111.4 272h11v10h-11z" stroke-dasharray="1.5 1.2"/><path d="M1111.4 269.5v3M1109.9 271h3"/><path d="M1109.5 304.5l12-12"/><path d="M1109.5 327l11-11"/><path d="M1121.5 315l-5 1 4 4z" fill="#d8d8d8"/><path d="M1109.5 349.5q0-10 11-11"/><path d="M1109.5 371l3-5 2 2 3-5 1 2 3-4"/><path d="M1109.5 388.5h12M1110.5 385.5l-1.5 3 1.5 3M1120.5 385.5l1.5 3-1.5 3M1109.5 385.5v6M1121.5 385.5v6"/><rect x="1109.5" y="406" width="12" height="10" rx="0.5"/><ellipse cx="1115.5" cy="433.5" rx="6" ry="5"/><path d="M1109.5 450h6l5 5-6 7h-5z"/><path d="M1110 472.5h12.5M1110 472.5v13" stroke="#7d62d0" stroke-width="1.1" stroke-dasharray="1 1"/><path d="M1113.5 484.5h8v-9.5l-8 5z" stroke-width="1.1"/><circle cx="1113.5" cy="484.5" r="1" fill="#d8d8d8"/><circle cx="1121.5" cy="484.5" r="1" fill="#d8d8d8"/><circle cx="1121.5" cy="475" r="1" fill="#d8d8d8"/><circle cx="1113.5" cy="480" r="1" fill="#d8d8d8"/><path d="M1110 495h12.5M1110 495v13" stroke="#7d62d0" stroke-width="1.1" stroke-dasharray="1 1"/><path d="M1113.5 507.5h8.5v-10h-4.5l-4 4.5z" stroke-width="1.1"/><path d="M1110 517.5h12.5M1110 517.5v13" stroke="#7d62d0" stroke-width="1.1" stroke-dasharray="1 1"/><path d="M1113 520.5v7M1122 520.5v7M1114 524h7" stroke-width="1.1"/><path d="M1116 522.5l-2 1.5 2 1.5M1119 522.5l2 1.5-2 1.5" fill="#d8d8d8" stroke-width="0.8"/><path d="M1110 539.5h12.5M1110 539.5v13" stroke="#7d62d0" stroke-width="1.1" stroke-dasharray="1 1"/><path d="M1113 551h9v-8l-9 8z" stroke-width="1"/><path d="M1115.5 549v2M1117.5 547.5v3.5M1119.5 546v5" stroke-width="0.8"/></svg>
<div class="a" style="left:258px;top:598.2px;width:872px;height:22px;background:#2e2e2e"></div>
<div class="a" style="left:390.4px;top:598.2px;width:22px;height:22px;background:#175a92"></div>
<div class="a" style="left:525.3px;top:603px;width:172px;height:11.6px;border:1px solid #5e5e5e;border-radius:2px"></div>
<div class="a st" style="left:554.4px;top:603.6px;letter-spacing:-0.45px">[4] Drawing1-Layout1 (4) (4 of 6)</div>
<div class="a st" style="left:837.3px;top:603.8px;font-size:9.3px">16.54 x 11.69 in</div>
<div class="a st" style="left:912.3px;top:603.8px;font-size:9.1px">X: 27.47433 mm = 5 m, Y: 27.47433 mm = 5 m</div>
<svg class="a" style="left:0;top:598px" width="1130" height="22" fill="none" stroke="#d8d8d8" stroke-width="1.1"><rect x="263.5" y="5.5" width="10.5" height="10" rx="1" stroke="#5a5a5a"/><rect x="285" y="5" width="11" height="11" rx="1"/><path d="M290.5 5v11"/><rect x="308" y="5" width="11" height="11" rx="1"/><path d="M308 10.5h11"/><path d="M325.8 6v9" stroke="#666"/><path d="M333.5 5h6l3.5 3.5v8h-9.5z M336 10h5M338.5 8v5 M336 13l2.5 2 2.5-2" stroke-width="0.9"/><path d="M355.5 5h11M356.5 14.5h10v-5h-4l-1.5-2h-4.5z M358 16.5h6" stroke-width="0.9"/><path d="M396.5 12.5v-4.5q0-1 1-1t1 1v3-5q0-1 1-1t1 1v5-5.5q0-1 1-1t1 1v5.5-4q0-1 1-1t1 1v6q0 4-4 5h-2q-2 0-4-3l-2-3q.5-1 1.5-.5z" stroke="#fff" stroke-width="1"/><path d="M420 5.5v10l2.5-2.5 2 4 1.5-.8-2-3.8h3.5z"/><path d="M441 5h3.5M441 16h3.5M442.7 5v11" stroke-width="1"/><path d="M445.5 15l2.2-6 2.2 6M446.3 13h2.8" stroke-width="0.9"/><circle cx="466.5" cy="9.5" r="4.2"/><path d="M469.5 12.5l4 4M466.5 7.8v0.3M464.5 11q2-2 4 0" stroke-width="1"/><path d="M488.5 6v8M494 6.5v7l-4.5-3.5z"/><path d="M516 6.5v7l-4.8-3.5z"/><path d="M706.5 6.5v7l4.8-3.5z"/><path d="M728.5 6.5v7l4.5-3.5zM734.5 6v8"/><path d="M743.3 5v11" stroke="#666"/><circle cx="755.7" cy="10.3" r="6"/><path d="M757.5 7v6.5l-4-3.2z"/><circle cx="778" cy="10.3" r="6" stroke="#555"/><path d="M776.5 7v6.5l4-3.2z" stroke="#555"/><circle cx="819.6" cy="10.3" r="6.2" stroke="#f0f0f0" stroke-width="1.2"/><path d="M819.6 4.1a6.2 6.2 0 0 1 0 12.4z" fill="#f0f0f0"/></svg>
<svg class="a" style="left:0;top:0" width="1130" height="620" font-family="Liberation Sans, sans-serif">
<defs><clipPath id="dc"><rect x="258" y="107.3" width="810.5" height="491"/></clipPath>
<pattern id="hat" x="381.4" y="419.9" width="3.3" height="6.45" patternUnits="userSpaceOnUse"><rect x="0.3" y="2.6" width="2.1" height="1.2" fill="#5a5a5a"/></pattern>
<pattern id="chb" width="3.2" height="3.2" patternUnits="userSpaceOnUse"><rect width="3.2" height="3.2" fill="#bbb"/><path d="M0 0h3.2M0 0v3.2" stroke="#222" stroke-width="0.7"/></pattern>
<pattern id="xh" width="5" height="5" patternUnits="userSpaceOnUse"><path d="M0 0l5 5M5 0l-5 5" stroke="#222" stroke-width="0.8"/></pattern>
<pattern id="grd" x="421" y="232" width="2.5" height="2.5" patternUnits="userSpaceOnUse"><path d="M0 0h2.5M0 0v2.5" stroke="#222" stroke-width="0.6"/></pattern>
</defs><g clip-path="url(#dc)">
<rect x="293.3" y="137" width="752.2" height="470" stroke="#111" stroke-width="1.2" fill="none" />
<line x1="609" y1="137" x2="609" y2="588" stroke="#111" stroke-width="0.9" />
<line x1="293.3" y1="362" x2="609" y2="362" stroke="#111" stroke-width="0.9" />
<line x1="888.5" y1="137" x2="888.5" y2="336.5" stroke="#111" stroke-width="0.9" />
<line x1="888.5" y1="336.5" x2="1045.5" y2="336.5" stroke="#111" stroke-width="0.9" />
<line x1="609" y1="510" x2="1045.5" y2="510" stroke="#111" stroke-width="0.9" />
<line x1="293.3" y1="587.6" x2="1045.5" y2="587.6" stroke="#111" stroke-width="1" />
<line x1="293.3" y1="597.8" x2="1045.5" y2="597.8" stroke="#111" stroke-width="1.4" />
<line x1="334.4" y1="587.6" x2="334.4" y2="598" stroke="#111" stroke-width="0.9" />
<line x1="484.6" y1="587.6" x2="484.6" y2="598" stroke="#111" stroke-width="0.9" />
<line x1="681.8" y1="587.6" x2="681.8" y2="598" stroke="#111" stroke-width="0.9" />
<line x1="873.4" y1="587.6" x2="873.4" y2="598" stroke="#111" stroke-width="0.9" />
<line x1="1001.6" y1="587.6" x2="1001.6" y2="598" stroke="#111" stroke-width="0.9" />
<text x="487" y="594.5" font-size="4.9" fill="#111" text-anchor="start" >PROPOSED PROJECT</text>
<text x="684" y="594.5" font-size="4.9" fill="#111" text-anchor="start" >OWNER</text>
<text x="876" y="594.5" font-size="4.9" fill="#111" text-anchor="start" >SHEET CONTENT:</text>
<text x="1004.5" y="594.5" font-size="4.9" fill="#111" text-anchor="start" >SHEET NUMBER</text>
<circle cx="398.6" cy="145.4" r="2.8" stroke="#111" stroke-width="0.85" fill="none"/>
<line x1="398.6" y1="148.2" x2="398.6" y2="166" stroke="#111" stroke-width="0.85" />
<circle cx="433.6" cy="145.4" r="2.8" stroke="#111" stroke-width="0.85" fill="none"/>
<line x1="433.6" y1="148.2" x2="433.6" y2="166" stroke="#111" stroke-width="0.85" />
<circle cx="452" cy="145.4" r="2.8" stroke="#111" stroke-width="0.85" fill="none"/>
<line x1="452" y1="148.2" x2="452" y2="166" stroke="#111" stroke-width="0.85" />
<circle cx="464.4" cy="145.4" r="2.8" stroke="#111" stroke-width="0.85" fill="none"/>
<line x1="464.4" y1="148.2" x2="464.4" y2="166" stroke="#111" stroke-width="0.85" />
<circle cx="502.6" cy="145.4" r="2.8" stroke="#111" stroke-width="0.85" fill="none"/>
<line x1="502.6" y1="148.2" x2="502.6" y2="166" stroke="#111" stroke-width="0.85" />
<circle cx="457" cy="142.4" r="2.8" stroke="#111" stroke-width="0.85" fill="none"/>
<line x1="457" y1="145.2" x2="457" y2="160" stroke="#111" stroke-width="0.85" />
<line x1="397" y1="155" x2="502.6" y2="155" stroke="#111" stroke-width="0.85" />
<line x1="397" y1="162.6" x2="502.6" y2="162.6" stroke="#111" stroke-width="0.85" />
<circle cx="397" cy="155" r="1.1" fill="#111"/>
<circle cx="397" cy="162.6" r="1.1" fill="#111"/>
<circle cx="451.5" cy="162.6" r="1.1" fill="#111"/>
<circle cx="484" cy="162.6" r="1.1" fill="#111"/>
<circle cx="502.6" cy="162.6" r="1.1" fill="#111"/>
<circle cx="502.6" cy="155" r="1.1" fill="#111"/>
<line x1="484" y1="162.6" x2="484" y2="172" stroke="#111" stroke-width="0.85" />
<text x="421" y="160.8" font-size="3.2" fill="#111" text-anchor="middle" >5.000</text>
<text x="452" y="153.6" font-size="3.2" fill="#111" text-anchor="middle" >10.000</text>
<text x="468" y="160.8" font-size="3.2" fill="#111" text-anchor="middle" >1.500</text>
<text x="494" y="160.8" font-size="3.2" fill="#111" text-anchor="middle" >1.900</text>
<line x1="505" y1="172.3" x2="546.5" y2="172.3" stroke="#111" stroke-width="0.85" />
<circle cx="520.4" cy="172.3" r="1.1" fill="#111"/>
<circle cx="536.3" cy="172.3" r="1.1" fill="#111"/>
<circle cx="551.5" cy="172.3" r="4.2" stroke="#111" stroke-width="0.8" fill="none"/>
<circle cx="351.3" cy="172.6" r="4.2" stroke="#111" stroke-width="0.8" fill="none"/>
<text x="351.3" y="174.29999999999998" font-size="5" fill="#111" text-anchor="middle" >1</text>
<line x1="355.5" y1="172.6" x2="397" y2="172.6" stroke="#111" stroke-width="0.8" />
<circle cx="351.3" cy="204.6" r="4.2" stroke="#111" stroke-width="0.8" fill="none"/>
<text x="351.3" y="206.29999999999998" font-size="5" fill="#111" text-anchor="middle" >2</text>
<line x1="355.5" y1="204.6" x2="397" y2="204.6" stroke="#111" stroke-width="0.8" />
<circle cx="351.3" cy="247.6" r="4.2" stroke="#111" stroke-width="0.8" fill="none"/>
<text x="351.3" y="249.29999999999998" font-size="5" fill="#111" text-anchor="middle" >3</text>
<line x1="355.5" y1="247.6" x2="397" y2="247.6" stroke="#111" stroke-width="0.8" />
<circle cx="351.3" cy="270" r="4.2" stroke="#111" stroke-width="0.8" fill="none"/>
<text x="351.3" y="271.7" font-size="5" fill="#111" text-anchor="middle" >4</text>
<line x1="355.5" y1="270" x2="397" y2="270" stroke="#111" stroke-width="0.8" />
<circle cx="351.3" cy="298.5" r="4.2" stroke="#111" stroke-width="0.8" fill="none"/>
<text x="351.3" y="300.2" font-size="5" fill="#111" text-anchor="middle" >5</text>
<line x1="355.5" y1="298.5" x2="397" y2="298.5" stroke="#111" stroke-width="0.8" />
<line x1="374.3" y1="172.6" x2="374.3" y2="298.5" stroke="#111" stroke-width="0.85" />
<line x1="385.3" y1="172.6" x2="385.3" y2="298.5" stroke="#111" stroke-width="0.85" />
<circle cx="374.3" cy="172.6" r="1.1" fill="#111"/>
<circle cx="385.3" cy="172.6" r="1.1" fill="#111"/>
<circle cx="374.3" cy="298.5" r="1.1" fill="#111"/>
<circle cx="385.3" cy="298.5" r="1.1" fill="#111"/>
<circle cx="385.3" cy="204.6" r="1.1" fill="#111"/>
<circle cx="385.3" cy="238" r="1.1" fill="#111"/>
<circle cx="385.3" cy="279.3" r="1.1" fill="#111"/>
<text x="372.5" y="236" font-size="3.2" fill="#111" text-anchor="middle" transform="rotate(-90 372.5 236)">12.000</text>
<text x="383.5" y="188" font-size="3.2" fill="#111" text-anchor="middle" transform="rotate(-90 383.5 188)">3.200</text>
<text x="383.5" y="221" font-size="3.2" fill="#111" text-anchor="middle" transform="rotate(-90 383.5 221)">3.000</text>
<text x="383.5" y="262" font-size="3.2" fill="#111" text-anchor="middle" transform="rotate(-90 383.5 262)">3.400</text>
<text x="383.5" y="289" font-size="3.2" fill="#111" text-anchor="middle" transform="rotate(-90 383.5 289)">1.400</text>
<path d="M397.6 172.3 L502.6 172.3" stroke="#b4b4b4" stroke-width="3.4" fill="none"/><path d="M397.6 172.3 L502.6 172.3" stroke="#555" stroke-width="1.3" fill="none" stroke-dasharray="0.7 1.5"/>
<path d="M397.6 172.3 L397.6 279.3 L434.6 279.3 L434.6 298.5 L470 298.5" stroke="#b4b4b4" stroke-width="3.4" fill="none"/><path d="M397.6 172.3 L397.6 279.3 L434.6 279.3 L434.6 298.5 L470 298.5" stroke="#555" stroke-width="1.3" fill="none" stroke-dasharray="0.7 1.5"/>
<path d="M452.5 172.3 L452.5 205 L460.7 205 L460.7 298.5" stroke="#b4b4b4" stroke-width="3.4" fill="none"/><path d="M452.5 172.3 L452.5 205 L460.7 205 L460.7 298.5" stroke="#555" stroke-width="1.3" fill="none" stroke-dasharray="0.7 1.5"/>
<line x1="397.6" y1="279.3" x2="397.6" y2="298.5" stroke="#111" stroke-width="0.6" />
<rect x="392.35" y="167.05" width="10.5" height="10.5" stroke="#222" stroke-width="0.6" fill="none" stroke-dasharray="1.2 0.8"/><rect x="395.6" y="170.3" width="4" height="4" stroke="#222" stroke-width="0.6" fill="#fff"/>
<rect x="447.25" y="167.05" width="10.5" height="10.5" stroke="#222" stroke-width="0.6" fill="none" stroke-dasharray="1.2 0.8"/><rect x="450.5" y="170.3" width="4" height="4" stroke="#222" stroke-width="0.6" fill="#fff"/>
<rect x="497.35" y="167.05" width="10.5" height="10.5" stroke="#222" stroke-width="0.6" fill="none" stroke-dasharray="1.2 0.8"/><rect x="500.6" y="170.3" width="4" height="4" stroke="#222" stroke-width="0.6" fill="#fff"/>
<rect x="392.35" y="199.35" width="10.5" height="10.5" stroke="#222" stroke-width="0.6" fill="none" stroke-dasharray="1.2 0.8"/><rect x="395.6" y="202.6" width="4" height="4" stroke="#222" stroke-width="0.6" fill="#fff"/>
<rect x="447.25" y="199.35" width="10.5" height="10.5" stroke="#222" stroke-width="0.6" fill="none" stroke-dasharray="1.2 0.8"/><rect x="450.5" y="202.6" width="4" height="4" stroke="#222" stroke-width="0.6" fill="#fff"/>
<rect x="392.35" y="242.35" width="10.5" height="10.5" stroke="#222" stroke-width="0.6" fill="none" stroke-dasharray="1.2 0.8"/><rect x="395.6" y="245.6" width="4" height="4" stroke="#222" stroke-width="0.6" fill="#fff"/>
<rect x="392.35" y="293.25" width="10.5" height="10.5" stroke="#222" stroke-width="0.6" fill="none" stroke-dasharray="1.2 0.8"/><rect x="395.6" y="296.5" width="4" height="4" stroke="#222" stroke-width="0.6" fill="#fff"/>
<rect x="429.35" y="293.25" width="10.5" height="10.5" stroke="#222" stroke-width="0.6" fill="none" stroke-dasharray="1.2 0.8"/><rect x="432.6" y="296.5" width="4" height="4" stroke="#222" stroke-width="0.6" fill="#fff"/>
<rect x="455.45" y="293.25" width="10.5" height="10.5" stroke="#222" stroke-width="0.6" fill="none" stroke-dasharray="1.2 0.8"/><rect x="458.7" y="296.5" width="4" height="4" stroke="#222" stroke-width="0.6" fill="#fff"/>
<rect x="455.45" y="264.75" width="10.5" height="10.5" stroke="#222" stroke-width="0.6" fill="none" stroke-dasharray="1.2 0.8"/><rect x="458.7" y="268" width="4" height="4" stroke="#222" stroke-width="0.6" fill="#fff"/>
<rect x="455.45" y="242.35" width="10.5" height="10.5" stroke="#222" stroke-width="0.6" fill="none" stroke-dasharray="1.2 0.8"/><rect x="458.7" y="245.6" width="4" height="4" stroke="#222" stroke-width="0.6" fill="#fff"/>
<line x1="348" y1="186" x2="426.4" y2="236.8" stroke="#111" stroke-width="0.8" />
<line x1="343" y1="186" x2="348" y2="186" stroke="#111" stroke-width="0.8" />
<circle cx="426.4" cy="236.8" r="5" stroke="#111" stroke-width="0.9" fill="url(#grd)"/>
<text x="338" y="187.0" font-size="2.6" fill="#111" text-anchor="end" >100 MM THK CONCRETE</text>
<text x="338" y="190.3" font-size="2.6" fill="#111" text-anchor="end" >SLAB WITH 10 MMo</text>
<text x="338" y="193.6" font-size="2.6" fill="#111" text-anchor="end" >REBARS SPACED @</text>
<text x="338" y="196.9" font-size="2.6" fill="#111" text-anchor="end" >400 MM BOTHWAYS</text>
<line x1="396.7" y1="312.8" x2="470" y2="312.8" stroke="#111" stroke-width="0.85" />
<line x1="396.7" y1="320.8" x2="470" y2="320.8" stroke="#111" stroke-width="0.85" />
<circle cx="396.7" cy="312.8" r="1.1" fill="#111"/>
<circle cx="433.7" cy="312.8" r="1.1" fill="#111"/>
<circle cx="455.4" cy="312.8" r="1.1" fill="#111"/>
<circle cx="396.7" cy="320.8" r="1.1" fill="#111"/>
<text x="415.6" y="311.5" font-size="3.2" fill="#111" text-anchor="middle" >3.500</text>
<text x="444.6" y="311.5" font-size="3.2" fill="#111" text-anchor="middle" >2.000</text>
<text x="451.2" y="319.2" font-size="3.2" fill="#111" text-anchor="middle" >10.000</text>
<circle cx="396.7" cy="333" r="2.8" stroke="#111" stroke-width="0.85" fill="none"/>
<line x1="396.7" y1="330.2" x2="396.7" y2="312.8" stroke="#111" stroke-width="0.85" />
<circle cx="433.7" cy="333" r="2.8" stroke="#111" stroke-width="0.85" fill="none"/>
<line x1="433.7" y1="330.2" x2="433.7" y2="312.8" stroke="#111" stroke-width="0.85" />
<circle cx="451.6" cy="333" r="2.8" stroke="#111" stroke-width="0.85" fill="none"/>
<line x1="451.6" y1="330.2" x2="451.6" y2="312.8" stroke="#111" stroke-width="0.85" />
<circle cx="456" cy="336" r="2.8" stroke="#111" stroke-width="0.85" fill="none"/>
<line x1="456" y1="333.2" x2="456" y2="312.8" stroke="#111" stroke-width="0.85" />
<circle cx="463.5" cy="333" r="2.8" stroke="#111" stroke-width="0.85" fill="none"/>
<line x1="463.5" y1="330.2" x2="463.5" y2="312.8" stroke="#111" stroke-width="0.85" />
<circle cx="393.9" cy="348.7" r="9.5" stroke="#111" stroke-width="1" fill="none"/>
<path d="M384.4 348.7a9.5 9.5 0 0 0 19 0z" fill="#111"/>
<text x="408.4" y="346.6" font-size="9.5" fill="#111" text-anchor="start" >FOUNDATION PLAN</text>
<line x1="403" y1="348.9" x2="520" y2="348.9" stroke="#111" stroke-width="0.9" />
<text x="408.5" y="355.6" font-size="4.2" fill="#111" text-anchor="start" >SCALE:</text>
<circle cx="392.3" cy="376.6" r="3.6" stroke="#111" stroke-width="0.85" fill="none"/>
<text x="392.3" y="378" font-size="4" fill="#111" text-anchor="middle" >A</text>
<line x1="392.3" y1="380.2" x2="392.3" y2="400" stroke="#111" stroke-width="0.85" />
<circle cx="427" cy="376.6" r="3.6" stroke="#111" stroke-width="0.85" fill="none"/>
<text x="427" y="378" font-size="4" fill="#111" text-anchor="middle" >B</text>
<line x1="427" y1="380.2" x2="427" y2="400" stroke="#111" stroke-width="0.85" />
<circle cx="445.9" cy="376.6" r="3.6" stroke="#111" stroke-width="0.85" fill="none"/>
<text x="445.9" y="378" font-size="4" fill="#111" text-anchor="middle" >C</text>
<line x1="445.9" y1="380.2" x2="445.9" y2="400" stroke="#111" stroke-width="0.85" />
<circle cx="458" cy="376.6" r="3.6" stroke="#111" stroke-width="0.85" fill="none"/>
<text x="458" y="378" font-size="4" fill="#111" text-anchor="middle" >E</text>
<line x1="458" y1="380.2" x2="458" y2="400" stroke="#111" stroke-width="0.85" />
<circle cx="450.2" cy="367.4" r="3.6" stroke="#111" stroke-width="0.85" fill="none"/>
<text x="450.2" y="368.8" font-size="4" fill="#111" text-anchor="middle" >D</text>
<line x1="392" y1="386" x2="470" y2="386" stroke="#111" stroke-width="0.85" />
<line x1="392" y1="396" x2="470" y2="396" stroke="#111" stroke-width="0.85" />
<circle cx="392.3" cy="396" r="1.1" fill="#111"/>
<circle cx="446" cy="396" r="1.1" fill="#111"/>
<text x="420" y="395" font-size="3.2" fill="#111" text-anchor="middle" >5.000</text>
<text x="450" y="385" font-size="3.2" fill="#111" text-anchor="middle" >10.000</text>
<rect x="381.4" y="400.5" width="129.3" height="151.5" fill="url(#hat)" stroke="#333" stroke-width="0.6" stroke-dasharray="2 1.2"/>
<rect x="392.5" y="412.5" width="1.8" height="127" stroke="#111" stroke-width="0.6" fill="#fff" />
<line x1="392.5" y1="412.7" x2="470" y2="412.7" stroke="#111" stroke-width="1.4" />
<line x1="446" y1="396" x2="446" y2="560" stroke="#111" stroke-width="1.4" />
<rect x="392.5" y="520" width="38" height="19" stroke="#111" stroke-width="1" fill="none" />
<rect x="394" y="522" width="35" height="17" stroke="#111" stroke-width="0.5" fill="none" />
<path d="M446 446H460.5V488" stroke="#111" stroke-width="2.2" fill="none"/><path d="M446 446H460.5V488" stroke="#fff" stroke-width="0.8" fill="none"/>
<path d="M470 509H452V539" stroke="#111" stroke-width="2.2" fill="none"/><path d="M470 509H452V539" stroke="#fff" stroke-width="0.8" fill="none"/>
<line x1="383" y1="539" x2="470" y2="539" stroke="#111" stroke-width="1.2" />
<path d="M452 539.5H498V480" stroke="#111" stroke-width="2.2" fill="none"/><path d="M452 539.5H498V480" stroke="#fff" stroke-width="0.8" fill="none"/>
<circle cx="452.3" cy="539.3" r="1.3" stroke="#111" stroke-width="0.7" fill="#fff"/>
<circle cx="498" cy="539.3" r="1.3" stroke="#111" stroke-width="0.7" fill="#fff"/>
<line x1="512.6" y1="541" x2="549" y2="541" stroke="#111" stroke-width="0.85" />
<circle cx="536" cy="541" r="1.1" fill="#111"/>
<circle cx="549" cy="541" r="1.1" fill="#111"/>
<line x1="536" y1="530" x2="536" y2="541" stroke="#111" stroke-width="0.85" />
<line x1="549" y1="530" x2="549" y2="541" stroke="#111" stroke-width="0.85" />
<circle cx="307.9" cy="412.7" r="4" stroke="#111" stroke-width="0.8" fill="none"/>
<text x="307.9" y="414.4" font-size="5" fill="#111" text-anchor="middle" >1</text>
<line x1="312" y1="412.7" x2="356" y2="412.7" stroke="#111" stroke-width="0.85" />
<line x1="382" y1="412.7" x2="392.5" y2="412.7" stroke="#111" stroke-width="0.85" />
<circle cx="307.9" cy="444.5" r="4" stroke="#111" stroke-width="0.8" fill="none"/>
<text x="307.9" y="446.2" font-size="5" fill="#111" text-anchor="middle" >2</text>
<line x1="312" y1="444.5" x2="356" y2="444.5" stroke="#111" stroke-width="0.85" />
<line x1="382" y1="444.5" x2="392.5" y2="444.5" stroke="#111" stroke-width="0.85" />
<circle cx="307.9" cy="487.6" r="4" stroke="#111" stroke-width="0.8" fill="none"/>
<text x="307.9" y="489.3" font-size="5" fill="#111" text-anchor="middle" >3</text>
<line x1="312" y1="487.6" x2="356" y2="487.6" stroke="#111" stroke-width="0.85" />
<circle cx="307.9" cy="509.4" r="4" stroke="#111" stroke-width="0.8" fill="none"/>
<text x="307.9" y="511.09999999999997" font-size="5" fill="#111" text-anchor="middle" >4</text>
<line x1="312" y1="509.4" x2="356" y2="509.4" stroke="#111" stroke-width="0.85" />
<circle cx="307.9" cy="539" r="4" stroke="#111" stroke-width="0.8" fill="none"/>
<text x="307.9" y="540.7" font-size="5" fill="#111" text-anchor="middle" >5</text>
<line x1="312" y1="539" x2="356" y2="539" stroke="#111" stroke-width="0.85" />
<line x1="382" y1="539" x2="392.5" y2="539" stroke="#111" stroke-width="0.85" />
<line x1="347" y1="478.7" x2="388" y2="478.7" stroke="#111" stroke-width="0.85" />
<line x1="347" y1="520.6" x2="388" y2="520.6" stroke="#111" stroke-width="0.85" />
<line x1="334.4" y1="412.7" x2="334.4" y2="539" stroke="#111" stroke-width="0.85" />
<line x1="347" y1="412.7" x2="347" y2="539" stroke="#111" stroke-width="0.85" />
<circle cx="334.4" cy="412.7" r="1.1" fill="#111"/>
<circle cx="347" cy="412.7" r="1.1" fill="#111"/>
<circle cx="334.4" cy="539" r="1.1" fill="#111"/>
<circle cx="347" cy="539" r="1.1" fill="#111"/>
<circle cx="347" cy="444.5" r="1.1" fill="#111"/>
<circle cx="347" cy="478.7" r="1.1" fill="#111"/>
<circle cx="347" cy="520.6" r="1.1" fill="#111"/>
<text x="332.5" y="476" font-size="3.2" fill="#111" text-anchor="middle" transform="rotate(-90 332.5 476)">12.000</text>
<text x="345" y="428" font-size="3.2" fill="#111" text-anchor="middle" transform="rotate(-90 345 428)">3.200</text>
<text x="345" y="462" font-size="3.2" fill="#111" text-anchor="middle" transform="rotate(-90 345 462)">3.000</text>
<text x="345" y="500" font-size="3.2" fill="#111" text-anchor="middle" transform="rotate(-90 345 500)">3.400</text>
<text x="345" y="528" font-size="3.2" fill="#111" text-anchor="middle" transform="rotate(-90 345 528)">1.400</text>
<line x1="392.3" y1="559.2" x2="499.5" y2="559.2" stroke="#111" stroke-width="0.85" />
<line x1="392.3" y1="567" x2="499.5" y2="567" stroke="#111" stroke-width="0.85" />
<circle cx="392.3" cy="559.2" r="1.1" fill="#111"/>
<line x1="392.3" y1="552" x2="392.3" y2="562" stroke="#111" stroke-width="0.6" />
<circle cx="429.4" cy="559.2" r="1.1" fill="#111"/>
<line x1="429.4" y1="552" x2="429.4" y2="562" stroke="#111" stroke-width="0.6" />
<circle cx="450.6" cy="559.2" r="1.1" fill="#111"/>
<line x1="450.6" y1="552" x2="450.6" y2="562" stroke="#111" stroke-width="0.6" />
<circle cx="499.5" cy="559.2" r="1.1" fill="#111"/>
<line x1="499.5" y1="552" x2="499.5" y2="562" stroke="#111" stroke-width="0.6" />
<circle cx="392.3" cy="567" r="1.1" fill="#111"/>
<circle cx="499.5" cy="567" r="1.1" fill="#111"/>
<text x="411" y="557.8" font-size="3.2" fill="#111" text-anchor="middle" >3.500</text>
<text x="440" y="557.8" font-size="3.2" fill="#111" text-anchor="middle" >2.000</text>
<text x="475" y="557.8" font-size="3.4" fill="#111" text-anchor="middle" >4.500</text>
<text x="446" y="566" font-size="3.2" fill="#111" text-anchor="middle" >10.000</text>
<circle cx="381" cy="577.7" r="8.8" stroke="#111" stroke-width="1" fill="none"/>
<path d="M372.2 577.7a8.8 8.8 0 0 0 17.6 0z" fill="#111"/>
<text x="394" y="576.2" font-size="9.1" fill="#111" text-anchor="start" >ROOF FRAMING PLAN</text>
<line x1="390.4" y1="578.2" x2="494.5" y2="578.2" stroke="#111" stroke-width="0.9" />
<text x="394" y="584.5" font-size="4.2" fill="#111" text-anchor="start" >SCALE:</text>
<text x="471" y="584.5" font-size="4.2" fill="#111" text-anchor="start" >1:100 MTS</text>
<rect x="818.5" y="151" width="3.5" height="10" stroke="#111" stroke-width="0.7" fill="none" />
<rect x="815" y="155" width="10" height="20" stroke="#111" stroke-width="0.7" fill="none" />
<line x1="825" y1="165" x2="855" y2="165" stroke="#111" stroke-width="0.6" />
<text x="856" y="165.5" font-size="2.5" fill="#111" text-anchor="start" >8 x 10 MM BARS</text>
<text x="856" y="168" font-size="2.5" fill="#111" text-anchor="start" >@ 0.40 M SPACING</text>
<path d="M946.4 262V170Q946.4 167.4 949 167.4H955Q957.6 167.4 957.6 170V262" stroke="#111" stroke-width="0.9" fill="none"/>
<line x1="949.3" y1="170" x2="949.3" y2="262" stroke="#111" stroke-width="0.7" />
<line x1="955" y1="170" x2="955" y2="262" stroke="#111" stroke-width="0.7" />
<rect x="951" y="163" width="4" height="11" rx="2" stroke="#111" stroke-width="0.8" fill="#fff"/><rect x="951.6" y="169" width="2.8" height="4.5" fill="#111"/>
<line x1="946.4" y1="180" x2="957.6" y2="180" stroke="#111" stroke-width="0.9" />
<line x1="946.4" y1="193.5" x2="957.6" y2="193.5" stroke="#111" stroke-width="0.9" />
<line x1="946.4" y1="207" x2="957.6" y2="207" stroke="#111" stroke-width="0.9" />
<line x1="946.4" y1="220.5" x2="957.6" y2="220.5" stroke="#111" stroke-width="0.9" />
<line x1="946.4" y1="234" x2="957.6" y2="234" stroke="#111" stroke-width="0.9" />
<line x1="946.4" y1="247.5" x2="957.6" y2="247.5" stroke="#111" stroke-width="0.9" />
<rect x="938" y="260.5" width="27" height="11.5" stroke="#111" stroke-width="0.8" fill="none" />
<rect x="958" y="200.5" width="39" height="10.5" fill="url(#xh)" stroke="#111" stroke-width="0.7"/>
<rect x="958" y="216.4" width="35.6" height="25.6" fill="url(#chb)" stroke="#111" stroke-width="0.7"/>
<path d="M993.6 242l-3 8 1 8-10 6-9 8" stroke="#111" stroke-width="0.6" fill="none"/>
<line x1="938" y1="200" x2="958" y2="200" stroke="#111" stroke-width="0.6" />
<line x1="939.3" y1="200" x2="939.3" y2="260.5" stroke="#111" stroke-width="0.7" />
<line x1="907" y1="199.5" x2="907" y2="274" stroke="#111" stroke-width="0.6" />
<line x1="903" y1="199.5" x2="946" y2="199.5" stroke="#111" stroke-width="0.5" />
<line x1="903" y1="240.6" x2="946" y2="240.6" stroke="#111" stroke-width="0.5" />
<line x1="903" y1="274" x2="946" y2="274" stroke="#111" stroke-width="0.5" />
<line x1="929" y1="260" x2="929" y2="274" stroke="#111" stroke-width="0.5" />
<line x1="938" y1="277" x2="965" y2="277" stroke="#111" stroke-width="0.5" />
<circle cx="907" cy="199.5" r="0.9" fill="#111"/>
<circle cx="907" cy="240.6" r="0.9" fill="#111"/>
<circle cx="907" cy="274" r="0.9" fill="#111"/>
<text x="905.5" y="220" font-size="3" fill="#111" text-anchor="middle" transform="rotate(-90 905.5 220)">0.60</text>
<text x="905.5" y="257" font-size="3" fill="#111" text-anchor="middle" transform="rotate(-90 905.5 257)">0.50</text>
<text x="951.5" y="280" font-size="3" fill="#111" text-anchor="middle" >0.45</text>
<path d="M953 186L965 173H977" stroke="#111" stroke-width="0.8" fill="none"/>
<circle cx="977" cy="173" r="0.9" fill="#111"/>
<text x="980" y="173" font-size="2.4" fill="#111" text-anchor="start" >10 MM VERTICAL BARS</text>
<text x="980" y="175.6" font-size="2.4" fill="#111" text-anchor="start" >@ 0.40 M SPACING</text>
<path d="M957 193L968 181.5H974" stroke="#111" stroke-width="0.8" fill="none"/>
<circle cx="974" cy="181.5" r="0.9" fill="#111"/>
<text x="977" y="182.5" font-size="2.4" fill="#111" text-anchor="start" >CHB</text>
<path d="M965 200L972 196H980" stroke="#111" stroke-width="0.8" fill="none"/>
<circle cx="980" cy="196" r="0.9" fill="#111"/>
<text x="982" y="195" font-size="2.4" fill="#111" text-anchor="start" >SLAB ON FILL</text>
<text x="982" y="197.6" font-size="2.4" fill="#111" text-anchor="start" >10 MM THK</text>
<text x="1000" y="211" font-size="2.3" fill="#111" text-anchor="start" >FILLING</text>
<text x="987" y="263" font-size="2.3" fill="#111" text-anchor="start" >FOOTING BARS</text>
<text x="941" y="296.5" font-size="8.2" fill="#111" text-anchor="start" >WF 1</text>
<text x="906" y="318.3" font-size="10.4" fill="#111" text-anchor="start" letter-spacing="-0.1">DET. OF WALL FOOTING</text>
<line x1="905" y1="321.7" x2="1029" y2="321.7" stroke="#111" stroke-width="0.9" />
<text x="906.5" y="327.3" font-size="4.2" fill="#111" text-anchor="start" >SCALE:</text>
<text x="1005" y="327.3" font-size="4.2" fill="#111" text-anchor="start" >1:20 MTS</text>
<rect x="880" y="370.5" width="37" height="8" fill="url(#xh)" stroke="#111" stroke-width="0.9"/>
<rect x="880" y="385" width="33" height="18" fill="url(#chb)" stroke="#111" stroke-width="0.8"/>
<path d="M913 403L917 433L903 456.5H880" stroke="#111" stroke-width="0.8" fill="none"/>
<rect x="880" y="443" width="22" height="14" stroke="#111" stroke-width="0.8" fill="none" />
<line x1="880" y1="454.5" x2="900" y2="454.5" stroke="#111" stroke-width="0.7" />
<line x1="880" y1="357.5" x2="911" y2="357.5" stroke="#111" stroke-width="0.8" />
<text x="911.5" y="357" font-size="2.3" fill="#111" text-anchor="start" >10 MM VERTICAL BARS</text>
<text x="911.5" y="360" font-size="2.3" fill="#111" text-anchor="start" >@ 0.40 M SPACING</text>
<path d="M887 371L895 366H904" stroke="#111" stroke-width="0.7" fill="none"/>
<text x="904" y="366" font-size="2.3" fill="#111" text-anchor="start" >SLAB ON FILL</text>
<line x1="908" y1="379" x2="922" y2="379" stroke="#111" stroke-width="0.7" />
<circle cx="922" cy="379" r="0.9" fill="#111"/>
<text x="924" y="380" font-size="2.3" fill="#111" text-anchor="start" >FILLING</text>
<text x="887" y="476.7" font-size="9" fill="#111" text-anchor="start" >ON</text>
<line x1="679" y1="532" x2="675" y2="549" stroke="#111" stroke-width="0.7" />
<line x1="976" y1="531" x2="981" y2="549" stroke="#111" stroke-width="0.7" />
<line x1="675" y1="531" x2="976" y2="531" stroke="#111" stroke-width="0.9" />
<line x1="676" y1="539.5" x2="978" y2="539.5" stroke="#111" stroke-width="0.6" />
<line x1="676" y1="546.2" x2="980" y2="546.2" stroke="#111" stroke-width="0.8" />
<line x1="675" y1="549" x2="981" y2="549" stroke="#111" stroke-width="1" />
<line x1="698.6" y1="531" x2="698.6" y2="546.2" stroke="#111" stroke-width="0.6" />
<line x1="702.0" y1="531" x2="702.0" y2="546.2" stroke="#111" stroke-width="0.6" />
<line x1="704.8" y1="531" x2="704.8" y2="546.2" stroke="#111" stroke-width="0.6" />
<line x1="707.6" y1="531" x2="707.6" y2="546.2" stroke="#111" stroke-width="0.6" />
<line x1="710.4" y1="531" x2="710.4" y2="546.2" stroke="#111" stroke-width="0.6" />
<line x1="713.2" y1="531" x2="713.2" y2="546.2" stroke="#111" stroke-width="0.6" />
<line x1="716.0" y1="531" x2="716.0" y2="546.2" stroke="#111" stroke-width="0.6" />
<line x1="718.8" y1="531" x2="718.8" y2="546.2" stroke="#111" stroke-width="0.6" />
<line x1="721.6" y1="531" x2="721.6" y2="546.2" stroke="#111" stroke-width="0.6" />
<line x1="726" y1="531" x2="726" y2="546.2" stroke="#111" stroke-width="0.6" />
<line x1="734" y1="531" x2="734" y2="546.2" stroke="#111" stroke-width="0.6" />
<line x1="742" y1="531" x2="742" y2="546.2" stroke="#111" stroke-width="0.6" />
<line x1="750" y1="531" x2="750" y2="546.2" stroke="#111" stroke-width="0.6" />
<line x1="758" y1="531" x2="758" y2="546.2" stroke="#111" stroke-width="0.6" />
<line x1="766" y1="531" x2="766" y2="546.2" stroke="#111" stroke-width="0.6" />
<line x1="774" y1="531" x2="774" y2="546.2" stroke="#111" stroke-width="0.6" />
<line x1="782" y1="531" x2="782" y2="546.2" stroke="#111" stroke-width="0.6" />
<line x1="790" y1="531" x2="790" y2="546.2" stroke="#111" stroke-width="0.6" />
<line x1="798" y1="531" x2="798" y2="546.2" stroke="#111" stroke-width="0.6" />
<line x1="806" y1="531" x2="806" y2="546.2" stroke="#111" stroke-width="0.6" />
<line x1="814" y1="531" x2="814" y2="546.2" stroke="#111" stroke-width="0.6" />
<line x1="822" y1="531" x2="822" y2="546.2" stroke="#111" stroke-width="0.6" />
<line x1="830" y1="531" x2="830" y2="546.2" stroke="#111" stroke-width="0.6" />
<line x1="838" y1="531" x2="838" y2="546.2" stroke="#111" stroke-width="0.6" />
<line x1="846" y1="531" x2="846" y2="546.2" stroke="#111" stroke-width="0.6" />
<line x1="854" y1="531" x2="854" y2="546.2" stroke="#111" stroke-width="0.6" />
<line x1="862" y1="531" x2="862" y2="546.2" stroke="#111" stroke-width="0.6" />
<line x1="870" y1="531" x2="870" y2="546.2" stroke="#111" stroke-width="0.6" />
<line x1="878" y1="531" x2="878" y2="546.2" stroke="#111" stroke-width="0.6" />
<line x1="886" y1="531" x2="886" y2="546.2" stroke="#111" stroke-width="0.6" />
<line x1="894" y1="531" x2="894" y2="546.2" stroke="#111" stroke-width="0.6" />
<line x1="902" y1="531" x2="902" y2="546.2" stroke="#111" stroke-width="0.6" />
<line x1="910" y1="531" x2="910" y2="546.2" stroke="#111" stroke-width="0.6" />
<line x1="920.0" y1="531" x2="920.0" y2="546.2" stroke="#111" stroke-width="0.6" />
<line x1="923.2" y1="531" x2="923.2" y2="546.2" stroke="#111" stroke-width="0.6" />
<line x1="926.4" y1="531" x2="926.4" y2="546.2" stroke="#111" stroke-width="0.6" />
<line x1="929.6" y1="531" x2="929.6" y2="546.2" stroke="#111" stroke-width="0.6" />
<line x1="932.8" y1="531" x2="932.8" y2="546.2" stroke="#111" stroke-width="0.6" />
<line x1="936.0" y1="531" x2="936.0" y2="546.2" stroke="#111" stroke-width="0.6" />
<line x1="939.2" y1="531" x2="939.2" y2="546.2" stroke="#111" stroke-width="0.6" />
<line x1="942.4" y1="531" x2="942.4" y2="546.2" stroke="#111" stroke-width="0.6" />
<line x1="945.6" y1="531" x2="945.6" y2="546.2" stroke="#111" stroke-width="0.6" />
<line x1="948.8" y1="531" x2="948.8" y2="546.2" stroke="#111" stroke-width="0.6" />
<line x1="952.0" y1="531" x2="952.0" y2="546.2" stroke="#111" stroke-width="0.6" />
<line x1="955" y1="531" x2="955" y2="558" stroke="#111" stroke-width="0.7" />
<line x1="955" y1="558" x2="959" y2="558" stroke="#111" stroke-width="0.6" />
<rect x="959" y="554.5" width="4" height="7.5" stroke="#111" stroke-width="0.7" fill="none" />
<line x1="970" y1="531" x2="970" y2="558" stroke="#111" stroke-width="0.7" />
<line x1="963" y1="558" x2="970" y2="558" stroke="#111" stroke-width="0.6" />
<rect x="973" y="538.2" width="11" height="3.6" rx="1.8" stroke="#111" stroke-width="0.7" fill="#fff"/>
<line x1="699" y1="561" x2="766" y2="561" stroke="#111" stroke-width="0.8" />
<circle cx="699" cy="561" r="1" fill="#111"/>
<circle cx="766" cy="561" r="1" fill="#111"/>
<line x1="766" y1="549" x2="766" y2="561" stroke="#111" stroke-width="0.6" />
<text x="733" y="559.5" font-size="3" fill="#111" text-anchor="middle" >L / 4</text>
<line x1="886" y1="561" x2="955.5" y2="561" stroke="#111" stroke-width="0.8" />
<circle cx="886" cy="561" r="1" fill="#111"/>
<circle cx="955.5" cy="561" r="1" fill="#111"/>
<line x1="886" y1="549" x2="886" y2="561" stroke="#111" stroke-width="0.6" />
<text x="921" y="559.5" font-size="3" fill="#111" text-anchor="middle" >L / 4</text>
<line x1="788" y1="548" x2="799" y2="559" stroke="#111" stroke-width="0.6" />
<line x1="799" y1="559" x2="804" y2="559" stroke="#111" stroke-width="0.6" />
<text x="810" y="560" font-size="2.5" fill="#111" text-anchor="start" >2-12 MMo - BOTTOM BARS</text>
<line x1="935" y1="532" x2="946" y2="519" stroke="#111" stroke-width="0.7" />
<line x1="946" y1="519" x2="951" y2="519" stroke="#111" stroke-width="0.7" />
<text x="961" y="520" font-size="2.5" fill="#111" text-anchor="start" >2-12 MMo - TOP BAR</text>
<text x="889" y="523" font-size="2.5" fill="#111" text-anchor="start" >2-10MMo MID-DEPTH</text>
<text x="889" y="527" font-size="2.5" fill="#111" text-anchor="start" >CONTINUOUS WEB BARS</text>
<rect x="1005.5" y="531" width="13.5" height="19" stroke="#111" stroke-width="0.9" fill="none" />
<rect x="1007" y="532.5" width="10.5" height="16" rx="2" stroke="#111" stroke-width="0.6" fill="none"/>
<circle cx="1008.8" cy="535" r="0.8" fill="#111"/>
<circle cx="1015.7" cy="535" r="0.8" fill="#111"/>
<circle cx="1008.8" cy="546" r="0.8" fill="#111"/>
<circle cx="1015.7" cy="546" r="0.8" fill="#111"/>
<line x1="1005.5" y1="521.2" x2="1019" y2="521.2" stroke="#111" stroke-width="0.6" />
<circle cx="1005.5" cy="521.2" r="0.8" fill="#111"/>
<circle cx="1019" cy="521.2" r="0.8" fill="#111"/>
<line x1="1005.5" y1="521.2" x2="1005.5" y2="531" stroke="#111" stroke-width="0.5" />
<line x1="1019" y1="521.2" x2="1019" y2="531" stroke="#111" stroke-width="0.5" />
<text x="1012" y="520" font-size="3" fill="#111" text-anchor="middle" >30</text>
<line x1="997.5" y1="531" x2="997.5" y2="550" stroke="#111" stroke-width="0.6" />
<circle cx="997.5" cy="531" r="0.8" fill="#111"/>
<circle cx="997.5" cy="550" r="0.8" fill="#111"/>
<line x1="997.5" y1="531" x2="1005.5" y2="531" stroke="#111" stroke-width="0.5" />
<line x1="997.5" y1="550" x2="1005.5" y2="550" stroke="#111" stroke-width="0.5" />
<text x="995.5" y="540.5" font-size="3" fill="#111" text-anchor="middle" transform="rotate(-90 995.5 540.5)">45</text>
<text x="771" y="577" font-size="10.3" fill="#111" text-anchor="start" letter-spacing="-0.15">TYPICAL BEAM</text>
<line x1="767" y1="579.8" x2="843" y2="579.8" stroke="#111" stroke-width="0.9" />
<text x="770.5" y="584.8" font-size="4.2" fill="#111" text-anchor="start" >SCALE:</text>
<text x="819" y="584.8" font-size="4.2" fill="#111" text-anchor="start" >1:20 MTS</text>
</g></svg>
<div class="a" style="left:464.3px;top:173.3px;width:422.7px;height:275px;background:#000"></div>
<svg class="a" style="left:464.3px;top:208.5px" width="423" height="240" viewBox="0 0 423 240">
<defs>
<linearGradient id="sand" x1="0" y1="0" x2="0.25" y2="1"><stop offset="0" stop-color="#a2814f"/><stop offset="0.45" stop-color="#9b7a4b"/><stop offset="1" stop-color="#8a6842"/></linearGradient>
<linearGradient id="slab" x1="0.3" y1="0" x2="0.6" y2="1"><stop offset="0" stop-color="#bdb3a2"/><stop offset="1" stop-color="#b2a795"/></linearGradient>
<linearGradient id="wood" x1="0" y1="0" x2="1" y2="0"><stop offset="0" stop-color="#a8865a"/><stop offset="1" stop-color="#b8996a"/></linearGradient>
<filter id="nz" x="0" y="0" width="100%" height="100%"><feTurbulence type="fractalNoise" baseFrequency="0.55" numOctaves="2" seed="7"/><feColorMatrix values="0 0 0 0 0.38  0 0 0 0 0.28  0 0 0 0 0.15  3 0 0 0 -1.45"/></filter>
<radialGradient id="shade" cx="1" cy="1" r="0.6"><stop offset="0" stop-color="#4a3520" stop-opacity="0.2"/><stop offset="1" stop-color="#4a3520" stop-opacity="0"/></radialGradient>
</defs>
<rect x="0" y="0" width="423" height="240" fill="url(#sand)"/>
<rect x="0" y="0" width="423" height="240" filter="url(#nz)" opacity="0.4"/>
<rect x="0" y="0" width="423" height="240" fill="url(#shade)"/>
<path d="M25 73L243.2 22L400 52L349 101L267 160L186 211L172 229L160 229z" fill="url(#slab)"/>
<path d="M11 56L25 73L165 240L145 240L0 78L0 62z" fill="#a17e50"/>
<path d="M11 56L243.2 8.7L243.2 22L25 73z" fill="#a98453"/>
<path d="M243.2 8.7L411 43.4L400 52L243.2 22z" fill="#9a7648"/>
<path d="M11 56L243.2 8.7L411 43.4" stroke="#d9c49c" stroke-width="1.3" fill="none"/>
<path d="M411 43.4L351.8 102.6L268.9 163.6L189.3 214.4L150 240L290 240L330 150L375.6 94.2L409.4 58.5z" fill="url(#wood)"/>
<path d="M411 43.4L351.8 102.6L268.9 163.6L189.3 214.4L150 240" stroke="#dcc59c" stroke-width="1.8" fill="none"/>
<path d="M398 57L397 72" stroke="#92714a" stroke-width="2.4"/>
<path d="M382 72L380 90" stroke="#92714a" stroke-width="2.4"/>
<path d="M362 92L360 110" stroke="#92714a" stroke-width="2.4"/>
<path d="M335 117L333 142" stroke="#92714a" stroke-width="2.4"/>
<path d="M305 138L302 172" stroke="#92714a" stroke-width="2.4"/>
<path d="M265 167L262 226" stroke="#92714a" stroke-width="2.4"/>
<path d="M228 190L225 238" stroke="#92714a" stroke-width="2.4"/>
<line x1="19" y1="17" x2="27" y2="66" stroke="#37312a" stroke-width="0.95" stroke-linecap="round"/>
<line x1="25" y1="17" x2="33" y2="66" stroke="#37312a" stroke-width="0.95" stroke-linecap="round"/>
<line x1="28" y1="18" x2="36" y2="66" stroke="#37312a" stroke-width="0.95" stroke-linecap="round"/>
<line x1="34" y1="16" x2="41" y2="66" stroke="#37312a" stroke-width="0.95" stroke-linecap="round"/>
<line x1="44" y1="32" x2="49" y2="66" stroke="#37312a" stroke-width="0.95" stroke-linecap="round"/>
<line x1="49" y1="33" x2="54" y2="66" stroke="#37312a" stroke-width="0.95" stroke-linecap="round"/>
<line x1="57" y1="33" x2="61" y2="66" stroke="#37312a" stroke-width="0.95" stroke-linecap="round"/>
<line x1="73" y1="48" x2="75" y2="66" stroke="#37312a" stroke-width="0.95" stroke-linecap="round"/>
<line x1="84" y1="50" x2="85" y2="66" stroke="#37312a" stroke-width="0.95" stroke-linecap="round"/>
<line x1="115" y1="8" x2="116" y2="54" stroke="#37312a" stroke-width="0.95" stroke-linecap="round"/>
<line x1="118.5" y1="8" x2="119.5" y2="54" stroke="#37312a" stroke-width="0.95" stroke-linecap="round"/>
<line x1="122" y1="10" x2="123" y2="54" stroke="#37312a" stroke-width="0.95" stroke-linecap="round"/>
<line x1="168" y1="2" x2="169" y2="40" stroke="#37312a" stroke-width="0.95" stroke-linecap="round"/>
<line x1="171.5" y1="2" x2="172.5" y2="40" stroke="#37312a" stroke-width="0.95" stroke-linecap="round"/>
<line x1="175" y1="2" x2="176" y2="40" stroke="#37312a" stroke-width="0.95" stroke-linecap="round"/>
<line x1="196" y1="1" x2="196" y2="33" stroke="#37312a" stroke-width="0.95" stroke-linecap="round"/>
<line x1="199" y1="1" x2="199" y2="33" stroke="#37312a" stroke-width="0.95" stroke-linecap="round"/>
<line x1="202" y1="1" x2="202" y2="33" stroke="#37312a" stroke-width="0.95" stroke-linecap="round"/>
<line x1="229" y1="1" x2="229" y2="25" stroke="#37312a" stroke-width="0.95" stroke-linecap="round"/>
<line x1="232" y1="1" x2="232" y2="25" stroke="#37312a" stroke-width="0.95" stroke-linecap="round"/>
<line x1="252.5" y1="3" x2="252.5" y2="24" stroke="#37312a" stroke-width="0.95" stroke-linecap="round"/>
<line x1="254.5" y1="3" x2="254.5" y2="24" stroke="#37312a" stroke-width="0.95" stroke-linecap="round"/>
<line x1="277" y1="1" x2="277" y2="32" stroke="#37312a" stroke-width="0.95" stroke-linecap="round"/>
<line x1="280" y1="1" x2="280" y2="32" stroke="#37312a" stroke-width="0.95" stroke-linecap="round"/>
<line x1="283.5" y1="1" x2="283.5" y2="32" stroke="#37312a" stroke-width="0.95" stroke-linecap="round"/>
<line x1="318" y1="1" x2="316" y2="40" stroke="#37312a" stroke-width="0.95" stroke-linecap="round"/>
<line x1="321" y1="1" x2="319" y2="40" stroke="#37312a" stroke-width="0.95" stroke-linecap="round"/>
<line x1="324" y1="1" x2="322" y2="40" stroke="#37312a" stroke-width="0.95" stroke-linecap="round"/>
<line x1="350.4" y1="10" x2="343.9" y2="76.3" stroke="#37312a" stroke-width="0.95" stroke-linecap="round"/>
<line x1="356" y1="10" x2="348.8" y2="77" stroke="#37312a" stroke-width="0.95" stroke-linecap="round"/>
<line x1="359.2" y1="10" x2="352" y2="80.4" stroke="#37312a" stroke-width="0.95" stroke-linecap="round"/>
<line x1="364.1" y1="12" x2="356.8" y2="78.8" stroke="#37312a" stroke-width="0.95" stroke-linecap="round"/>
<line x1="383.4" y1="8" x2="379.4" y2="55.4" stroke="#37312a" stroke-width="0.95" stroke-linecap="round"/>
<line x1="388.3" y1="6" x2="383.4" y2="56.2" stroke="#37312a" stroke-width="0.95" stroke-linecap="round"/>
<line x1="393.1" y1="6" x2="387.5" y2="56.2" stroke="#37312a" stroke-width="0.95" stroke-linecap="round"/>
<line x1="398" y1="8" x2="391.5" y2="53.8" stroke="#37312a" stroke-width="0.95" stroke-linecap="round"/>
<line x1="264.2" y1="36.3" x2="262" y2="92.7" stroke="#37312a" stroke-width="0.95" stroke-linecap="round"/>
<line x1="269.7" y1="36.3" x2="266.4" y2="93.8" stroke="#37312a" stroke-width="0.95" stroke-linecap="round"/>
<line x1="275.3" y1="37.4" x2="272" y2="95" stroke="#37312a" stroke-width="0.95" stroke-linecap="round"/>
<line x1="279.7" y1="37.4" x2="276.4" y2="95" stroke="#37312a" stroke-width="0.95" stroke-linecap="round"/>
<line x1="285.2" y1="35.2" x2="281.9" y2="96.1" stroke="#37312a" stroke-width="0.95" stroke-linecap="round"/>
<line x1="327" y1="55.4" x2="319.7" y2="103.8" stroke="#37312a" stroke-width="0.95" stroke-linecap="round"/>
<line x1="331.8" y1="51.3" x2="324.6" y2="103.8" stroke="#37312a" stroke-width="0.95" stroke-linecap="round"/>
<line x1="336.7" y1="53" x2="329.4" y2="103" stroke="#37312a" stroke-width="0.95" stroke-linecap="round"/>
<line x1="341.5" y1="51.3" x2="334.2" y2="103" stroke="#37312a" stroke-width="0.95" stroke-linecap="round"/>
<line x1="192" y1="89" x2="191" y2="210" stroke="#37312a" stroke-width="0.95" stroke-linecap="round"/>
<line x1="199" y1="92" x2="198" y2="212" stroke="#37312a" stroke-width="0.95" stroke-linecap="round"/>
<line x1="206" y1="90" x2="205" y2="212" stroke="#37312a" stroke-width="0.95" stroke-linecap="round"/>
<line x1="213" y1="92" x2="212" y2="212" stroke="#37312a" stroke-width="0.95" stroke-linecap="round"/>
<line x1="220" y1="88" x2="219" y2="210" stroke="#37312a" stroke-width="0.95" stroke-linecap="round"/>
<line x1="225" y1="96" x2="224" y2="212" stroke="#37312a" stroke-width="0.95" stroke-linecap="round"/>
</svg>
<div class="a" style="left:480.6px;top:271px;width:172.4px;height:168.4px;background:#fafae7;border:1px solid #d4d440"></div>
<div class="a" style="left:480.6px;top:271px;width:172.4px;height:7.6px;background:#dedd48"></div>
<div class="a" style="left:644.8px;top:278.6px;width:7.4px;height:160.0px;background:#cbcbc8"></div>
<svg class="a" style="left:480.6px;top:271px" width="172.4" height="168.4"><rect x="1.5" y="1.2" width="5" height="5.2" fill="#f0eeb0" stroke="#b8b850" stroke-width="0.5"/><rect x="8.5" y="3" width="4" height="1.5" fill="#555" opacity="0.5"/><path d="M165.9 1.5l4.5 4.5M170.4 1.5l-4.5 4.5" stroke="#1f5fb8" stroke-width="1.4"/><path d="M166.1 12l2.5-2.5 2.5 2.5z" fill="#888"/><rect x="164.8" y="8.5" width="6.2" height="5" fill="#eee" opacity="0.6"/><path d="M166.1 162.4l2.5 2.5 2.5-2.5z" fill="#888"/></svg>
<div class="a nt" style="left:483.20000000000005px;top:280.2px;width:160.4px">1. Check the formwork height — does it match the design<br>elevations? The formwork looks even in the photo, but it’s important<br>to verify it with a level.<br><br>2. Rebar protrusion appears correct — visually looks good, but<br>double check against structural drawings to ensure sufficient length<br>for tying with vertical elements (columns/walls).<br><br>3. Concrete quality control — record the pouring date and ensure<br>that test cubes are prepared for strength testing.</div>
<svg class="a" style="left:530.5px;top:253.8px" width="9" height="9"><path d="M0.5 0.5h7v5l-2.5 2.5h-4.5z" fill="#e6e43c" stroke="#b0ae20" stroke-width="0.6"/><path d="M2 2.5h4M2 4h4M2 5.5h2.5" stroke="#777" stroke-width="0.5"/></svg>
<div class="a" style="left:733.4px;top:312.9px;width:119.6px;height:129px;background:#fafae7;border:1px solid #d4d440"></div>
<div class="a" style="left:733.4px;top:312.9px;width:119.6px;height:7.6px;background:#dedd48"></div>
<div class="a" style="left:844.8px;top:320.5px;width:7.4px;height:120.6px;background:#cbcbc8"></div>
<svg class="a" style="left:733.4px;top:312.9px" width="119.6" height="129"><rect x="1.5" y="1.2" width="5" height="5.2" fill="#f0eeb0" stroke="#b8b850" stroke-width="0.5"/><rect x="8.5" y="3" width="4" height="1.5" fill="#555" opacity="0.5"/><path d="M113.1 1.5l4.5 4.5M117.6 1.5l-4.5 4.5" stroke="#1f5fb8" stroke-width="1.4"/><path d="M113.3 12l2.5-2.5 2.5 2.5z" fill="#888"/><rect x="112.0" y="8.5" width="6.2" height="5" fill="#eee" opacity="0.6"/><path d="M113.3 123l2.5 2.5 2.5-2.5z" fill="#888"/></svg>
<div class="a nt" style="left:736.0px;top:322.09999999999997px;width:107.6px">Is this really the correct foundation size? — It<br>looks bigger than the drawing. Is everything<br>going according to plan?<br><br>What about waterproofing? — When and how<br>will it be applied?<br><br>Will the foundation be insulated? — I’ve read<br>that it’s important. Is it included in the project?</div>
<svg class="a" style="left:735.8px;top:304px" width="9" height="9"><path d="M0.5 0.5h7v5l-2.5 2.5h-4.5z" fill="#e6e43c" stroke="#b0ae20" stroke-width="0.6"/><path d="M2 2.5h4M2 4h4M2 5.5h2.5" stroke="#777" stroke-width="0.5"/></svg>
<div class="a" style="left:806px;top:432px;font-size:7.2px;color:rgba(200,200,200,0.55);letter-spacing:-0.1px">Activate Windows</div>
<div class="a" style="left:806px;top:442px;font-size:4.4px;color:rgba(200,200,200,0.5)">Go to Settings to activate Windows.</div>
<div class="a" style="left:464.3px;top:448.3px;width:422.7px;height:35.7px;background:#000"></div>
<div class="a" style="left:464.3px;top:484px;width:422.7px;height:48.4px;background:#2e2e2e"></div>
<div class="a" style="left:575px;top:487.6px;width:200px;text-align:center;font-size:9px;font-weight:bold;color:#f4f4f4;letter-spacing:-0.1px">JobSiteComments.jpg</div>
<div class="a" style="left:575px;top:510.5px;width:200px;text-align:center;font-size:8px;color:#e0e0e0;line-height:9.2px;letter-spacing:-0.2px">(1 of 1)<br>7/15/2025 3:22 AM</div>
<div class="a" style="left:464.3px;top:208.5px;width:1.5px;height:240px;background:#4a4e55"></div>
<div class="a" style="left:885.8px;top:208.5px;width:1.4px;height:240px;background:#555b63"></div>
<div class="a" style="left:887.2px;top:173.3px;width:1.3px;height:359px;background:linear-gradient(90deg,#9a9a9a,#e8e8e8)"></div>
<div class="a" style="left:885.9px;top:484px;width:1.2px;height:48.4px;background:#151515"></div>
<div class="a" style="left:464.3px;top:531.2px;width:422.8px;height:1.2px;background:#151515"></div>
<svg class="a" style="left:0;top:480px" width="1130" height="60" fill="none" stroke="#ececec" stroke-width="1.3"><circle cx="489.5" cy="31.7" r="9.6"/><path d="M499.10 31.70L488.91 35.05" stroke-width="1"/><path d="M494.30 40.01L486.31 32.86" stroke-width="1"/><path d="M484.70 40.01L486.90 29.51" stroke-width="1"/><path d="M479.90 31.70L490.09 28.35" stroke-width="1"/><path d="M484.70 23.39L492.69 30.54" stroke-width="1"/><path d="M494.30 23.39L492.10 33.89" stroke-width="1"/><rect x="517.3" y="23.3" width="18.5" height="17" rx="0.5"/><path d="M518 37.5l5-6 3.5 3.5 3-3 5.5 5.5"/><circle cx="525" cy="27.5" r="1.4" fill="#ececec"/><path d="M556 40.5l1-5 11.5-11.5 3.8 3.8-11.5 11.5z M566 26.5l3.8 3.8"/><path d="M604.5 27v10l-7.5-5z" stroke="#888" stroke-width="1"/><path d="M748.5 27v10l7-5z" stroke="#888" stroke-width="1"/><path d="M820 30h-3.5v10h15v-10h-3.5M824 35v-12.5M820.5 26l3.5-3.5 3.5 3.5" stroke-width="1.2"/><path d="M836.5 30.5h4l-2 2z" fill="#ececec" stroke-width="0.5"/><path d="M853.5 26h16M858.5 26v-2.5h6v2.5M855 26l1.5 14.5h10l1.5-14.5M859 29v9M861.5 29v9M864 29v9" stroke-width="1.3"/></svg>
</div></body></html>
